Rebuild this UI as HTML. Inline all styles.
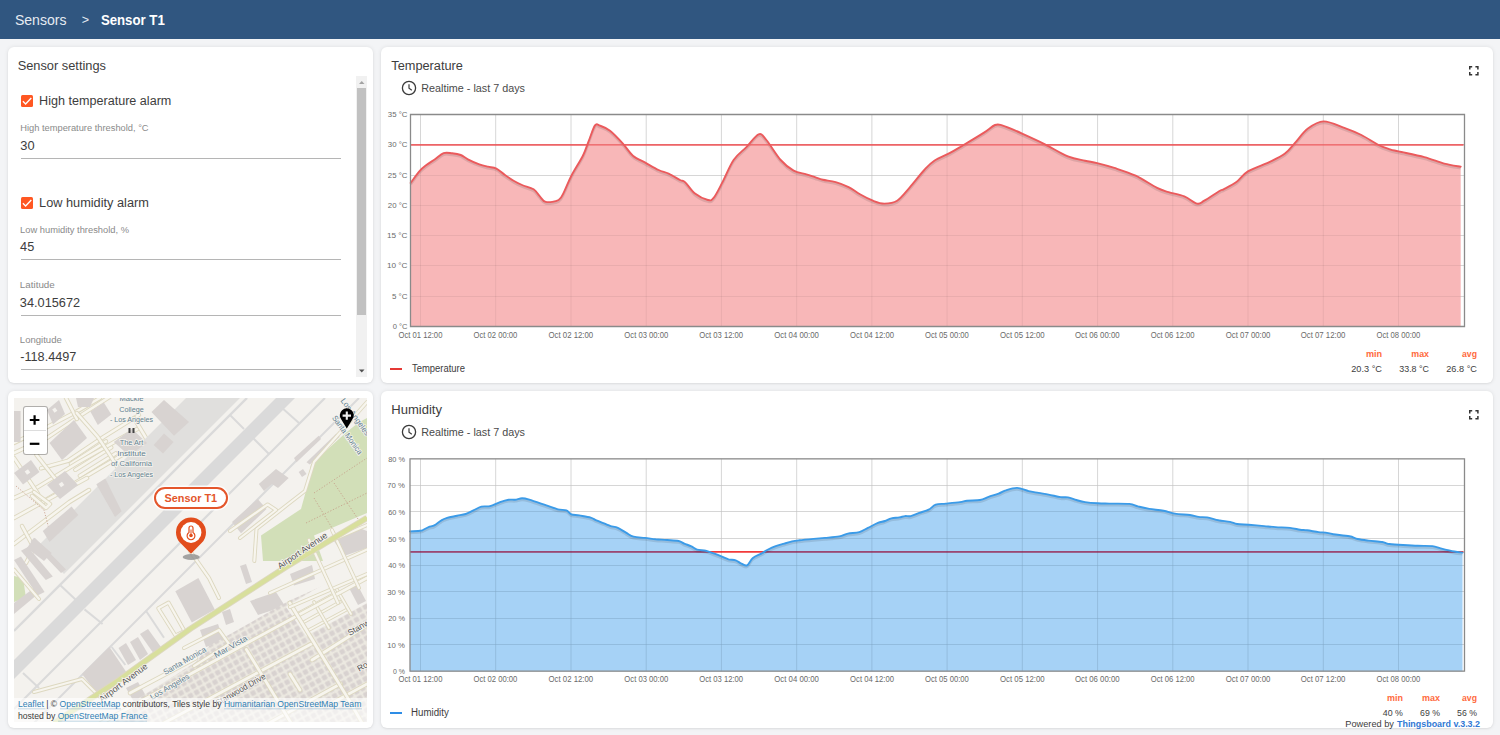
<!DOCTYPE html>
<html><head><meta charset="utf-8">
<style>
*{margin:0;padding:0;box-sizing:border-box}
html,body{width:1500px;height:735px;overflow:hidden;background:#f3f4f6;font-family:"Liberation Sans",sans-serif;color:rgba(0,0,0,0.76)}
.hdr{position:absolute;left:0;top:0;width:1500px;height:39px;background:#305680}
.hdr span{position:absolute;top:0;line-height:1;white-space:nowrap}
.card{position:absolute;background:#fff;border-radius:6px;box-shadow:0 0 4px rgba(0,0,0,.09),0 1px 2px rgba(0,0,0,.05)}
.t{position:absolute;white-space:nowrap;line-height:1}
svg text{font-family:"Liberation Sans",sans-serif}
.ax{font-size:7.6px;fill:#666}
</style></head><body>
<div class="hdr"></div>
<div class="card" style="left:8px;top:47px;width:365px;height:336px"></div>
<div class="card" style="left:381px;top:47px;width:1112px;height:336px"></div>
<div class="card" style="left:8px;top:391px;width:365px;height:337px"></div>
<div class="card" style="left:381px;top:391px;width:1112px;height:337px"></div>

<!-- settings -->
<div id="settings">
<div style="position:absolute;left:20.5px;top:94.7px;width:12.2px;height:12.2px;background:#ff5722;border-radius:1.5px"><svg width="12" height="12" style="position:absolute;left:0;top:0"><path d="M1.9,6.3 L4.6,8.9 L10.3,3.1" fill="none" stroke="#fff" stroke-width="1.4"/></svg></div>
<div style="position:absolute;left:20.5px;top:157.5px;width:320.5px;height:1px;background:#b5b5b5"></div>
<div style="position:absolute;left:20.5px;top:197.0px;width:12.2px;height:12.2px;background:#ff5722;border-radius:1.5px"><svg width="12" height="12" style="position:absolute;left:0;top:0"><path d="M1.9,6.3 L4.6,8.9 L10.3,3.1" fill="none" stroke="#fff" stroke-width="1.4"/></svg></div>
<div style="position:absolute;left:20.5px;top:258.8px;width:320.5px;height:1px;background:#b5b5b5"></div>
<div style="position:absolute;left:20.5px;top:314.6px;width:320.5px;height:1px;background:#b5b5b5"></div>
<div style="position:absolute;left:20.5px;top:368.6px;width:320.5px;height:1px;background:#b5b5b5"></div>
<div style="position:absolute;left:355.5px;top:76px;width:11.5px;height:300.6px;background:#f1f1f1"></div>
<div style="position:absolute;left:357px;top:88px;width:8.5px;height:227px;background:#c1c1c1"></div>
<svg width="12" height="12" style="position:absolute;left:355.5px;top:76px"><path d="M3,8 L8.5,8 L5.75,5 Z" fill="#a3a3a3"/></svg>
<svg width="12" height="12" style="position:absolute;left:355.5px;top:365px"><path d="M3,4.5 L8.5,4.5 L5.75,7.5 Z" fill="#505050"/></svg>
</div>

<svg width="1500" height="735" style="position:absolute;left:0;top:0">
<line x1="410.5" y1="114.5" x2="1464.5" y2="114.5" stroke="#e4e4e4" stroke-width="1"/>
<line x1="410.5" y1="144.5" x2="1464.5" y2="144.5" stroke="#e4e4e4" stroke-width="1"/>
<line x1="410.5" y1="175.5" x2="1464.5" y2="175.5" stroke="#e4e4e4" stroke-width="1"/>
<line x1="410.5" y1="205.5" x2="1464.5" y2="205.5" stroke="#e4e4e4" stroke-width="1"/>
<line x1="410.5" y1="235.5" x2="1464.5" y2="235.5" stroke="#e4e4e4" stroke-width="1"/>
<line x1="410.5" y1="265.5" x2="1464.5" y2="265.5" stroke="#e4e4e4" stroke-width="1"/>
<line x1="410.5" y1="296.5" x2="1464.5" y2="296.5" stroke="#e4e4e4" stroke-width="1"/>
<line x1="410.5" y1="326.5" x2="1464.5" y2="326.5" stroke="#e4e4e4" stroke-width="1"/>
<line x1="420.5" y1="114.5" x2="420.5" y2="326.5" stroke="#e4e4e4" stroke-width="1"/>
<line x1="495.7" y1="114.5" x2="495.7" y2="326.5" stroke="#e4e4e4" stroke-width="1"/>
<line x1="571.0" y1="114.5" x2="571.0" y2="326.5" stroke="#e4e4e4" stroke-width="1"/>
<line x1="646.2" y1="114.5" x2="646.2" y2="326.5" stroke="#e4e4e4" stroke-width="1"/>
<line x1="721.4" y1="114.5" x2="721.4" y2="326.5" stroke="#e4e4e4" stroke-width="1"/>
<line x1="796.7" y1="114.5" x2="796.7" y2="326.5" stroke="#e4e4e4" stroke-width="1"/>
<line x1="871.9" y1="114.5" x2="871.9" y2="326.5" stroke="#e4e4e4" stroke-width="1"/>
<line x1="947.1" y1="114.5" x2="947.1" y2="326.5" stroke="#e4e4e4" stroke-width="1"/>
<line x1="1022.3" y1="114.5" x2="1022.3" y2="326.5" stroke="#e4e4e4" stroke-width="1"/>
<line x1="1097.6" y1="114.5" x2="1097.6" y2="326.5" stroke="#e4e4e4" stroke-width="1"/>
<line x1="1172.8" y1="114.5" x2="1172.8" y2="326.5" stroke="#e4e4e4" stroke-width="1"/>
<line x1="1248.0" y1="114.5" x2="1248.0" y2="326.5" stroke="#e4e4e4" stroke-width="1"/>
<line x1="1323.3" y1="114.5" x2="1323.3" y2="326.5" stroke="#e4e4e4" stroke-width="1"/>
<line x1="1398.5" y1="114.5" x2="1398.5" y2="326.5" stroke="#e4e4e4" stroke-width="1"/>
<line x1="410.5" y1="144.8" x2="1463.5" y2="144.8" stroke="#ef5f62" stroke-width="1.3"/>
<path d="M410.7,182.9 C412.1,181.0 416.7,174.4 419.3,171.4 C421.9,168.4 423.8,167.0 426.4,165.0 C429.0,163.0 432.1,161.3 435.0,159.3 C437.9,157.3 440.8,154.1 443.6,153.1 C446.5,152.1 449.2,153.0 452.1,153.3 C455.0,153.6 458.1,154.0 460.7,155.0 C463.3,156.0 464.8,157.8 467.9,159.3 C471.0,160.9 476.0,163.1 479.3,164.3 C482.6,165.5 485.0,166.0 487.9,166.7 C490.8,167.4 493.5,167.2 496.4,168.6 C499.2,170.0 502.1,173.0 505.0,175.0 C507.9,177.0 510.8,179.0 513.6,180.7 C516.5,182.4 518.8,183.6 522.1,185.0 C525.4,186.4 530.7,187.5 533.6,189.3 C536.5,191.1 537.3,193.6 539.3,195.7 C541.3,197.8 542.5,201.2 545.7,201.9 C548.9,202.6 555.5,201.8 558.6,200.0 C561.7,198.2 562.2,195.5 564.3,191.4 C566.4,187.3 568.3,181.6 571.4,175.7 C574.5,169.8 580.0,161.4 582.9,155.7 C585.8,150.0 586.6,146.4 588.6,141.4 C590.6,136.4 593.1,128.0 595.0,125.4 C596.9,122.8 597.5,124.8 600.0,125.7 C602.5,126.6 606.2,127.7 610.0,130.7 C613.8,133.7 619.1,139.4 622.9,143.6 C626.7,147.8 629.1,152.5 632.9,155.7 C636.7,158.9 641.4,160.5 645.7,162.9 C650.0,165.3 654.8,168.2 658.6,170.0 C662.4,171.8 665.0,171.9 668.6,173.6 C672.2,175.3 677.3,178.6 680.0,180.0 C682.7,181.4 682.5,179.8 685.0,182.1 C687.5,184.4 691.2,190.6 695.0,193.6 C698.8,196.6 704.8,199.3 707.9,200.0 C711.0,200.7 711.2,200.8 713.6,197.9 C716.0,195.1 718.8,189.2 722.1,182.9 C725.4,176.6 729.6,166.0 733.6,160.0 C737.6,154.0 742.2,151.4 746.4,147.1 C750.6,142.8 755.3,135.5 758.6,134.3 C761.9,133.1 762.7,135.7 766.4,140.0 C770.1,144.3 776.2,154.9 780.7,160.0 C785.2,165.1 789.3,168.3 793.6,170.7 C797.9,173.1 802.8,173.2 806.4,174.3 C810.0,175.4 812.2,176.2 815.0,177.1 C817.8,178.0 819.4,178.9 822.9,179.7 C826.4,180.5 831.4,180.9 835.7,182.1 C840.0,183.3 844.6,185.1 848.6,187.1 C852.6,189.1 856.0,192.0 860.0,194.3 C864.0,196.6 868.9,199.1 872.9,200.7 C876.9,202.2 880.3,203.6 884.3,203.6 C888.3,203.6 892.8,203.4 897.1,200.7 C901.4,197.9 905.5,192.2 910.0,187.1 C914.5,182.0 920.2,174.4 924.3,170.0 C928.3,165.6 930.0,163.5 934.3,160.7 C938.6,157.8 945.1,155.5 950.0,152.9 C954.9,150.3 958.0,148.3 963.6,145.0 C969.2,141.7 978.4,136.2 983.6,132.9 C988.8,129.6 991.9,126.2 995.0,125.0 C998.1,123.8 997.6,124.0 1002.1,125.4 C1006.6,126.8 1015.0,130.4 1022.1,133.6 C1029.2,136.8 1037.4,140.5 1045.0,144.3 C1052.6,148.1 1061.2,153.7 1067.9,156.4 C1074.6,159.1 1080.1,159.6 1085.0,160.7 C1089.9,161.8 1092.2,161.9 1097.1,163.1 C1102.0,164.3 1107.9,165.8 1114.3,167.9 C1120.7,170.0 1128.6,172.4 1135.7,175.7 C1142.8,179.0 1151.6,185.2 1157.1,187.9 C1162.6,190.6 1164.1,190.7 1168.6,192.1 C1173.1,193.5 1179.5,194.5 1184.3,196.4 C1189.0,198.3 1193.8,202.9 1197.1,203.6 C1200.4,204.3 1200.5,202.8 1204.3,200.7 C1208.1,198.5 1216.8,192.6 1220.0,190.7 C1223.2,188.8 1220.9,190.7 1223.6,189.3 C1226.3,187.9 1232.4,185.1 1236.4,182.1 C1240.5,179.1 1242.4,174.7 1247.9,171.4 C1253.4,168.1 1263.1,165.1 1269.3,162.1 C1275.5,159.1 1280.7,156.8 1285.0,153.6 C1289.3,150.4 1291.2,147.1 1295.0,142.9 C1298.8,138.7 1303.1,132.2 1307.9,128.6 C1312.7,125.0 1317.5,121.5 1323.6,121.4 C1329.7,121.3 1338.0,125.6 1344.3,127.9 C1350.6,130.2 1355.7,132.2 1361.4,135.0 C1367.1,137.8 1373.8,142.6 1378.6,145.0 C1383.4,147.4 1386.7,148.2 1390.0,149.3 C1393.3,150.4 1392.9,150.1 1398.6,151.4 C1404.3,152.7 1416.7,155.1 1424.3,157.1 C1431.9,159.1 1438.2,162.0 1444.3,163.6 C1450.4,165.2 1458.0,166.2 1460.7,166.7 L1460.7,326.5 L410.7,326.5 Z" fill="#f8b7b8"/>
<line x1="410.5" y1="144.5" x2="1464.5" y2="144.5" stroke="rgba(0,0,0,0.06)" stroke-width="1"/>
<line x1="410.5" y1="175.5" x2="1464.5" y2="175.5" stroke="rgba(0,0,0,0.06)" stroke-width="1"/>
<line x1="410.5" y1="205.5" x2="1464.5" y2="205.5" stroke="rgba(0,0,0,0.06)" stroke-width="1"/>
<line x1="410.5" y1="235.5" x2="1464.5" y2="235.5" stroke="rgba(0,0,0,0.06)" stroke-width="1"/>
<line x1="410.5" y1="265.5" x2="1464.5" y2="265.5" stroke="rgba(0,0,0,0.06)" stroke-width="1"/>
<line x1="410.5" y1="296.5" x2="1464.5" y2="296.5" stroke="rgba(0,0,0,0.06)" stroke-width="1"/>
<line x1="420.5" y1="114.5" x2="420.5" y2="326.5" stroke="rgba(0,0,0,0.06)" stroke-width="1"/>
<line x1="495.7" y1="114.5" x2="495.7" y2="326.5" stroke="rgba(0,0,0,0.06)" stroke-width="1"/>
<line x1="571.0" y1="114.5" x2="571.0" y2="326.5" stroke="rgba(0,0,0,0.06)" stroke-width="1"/>
<line x1="646.2" y1="114.5" x2="646.2" y2="326.5" stroke="rgba(0,0,0,0.06)" stroke-width="1"/>
<line x1="721.4" y1="114.5" x2="721.4" y2="326.5" stroke="rgba(0,0,0,0.06)" stroke-width="1"/>
<line x1="796.7" y1="114.5" x2="796.7" y2="326.5" stroke="rgba(0,0,0,0.06)" stroke-width="1"/>
<line x1="871.9" y1="114.5" x2="871.9" y2="326.5" stroke="rgba(0,0,0,0.06)" stroke-width="1"/>
<line x1="947.1" y1="114.5" x2="947.1" y2="326.5" stroke="rgba(0,0,0,0.06)" stroke-width="1"/>
<line x1="1022.3" y1="114.5" x2="1022.3" y2="326.5" stroke="rgba(0,0,0,0.06)" stroke-width="1"/>
<line x1="1097.6" y1="114.5" x2="1097.6" y2="326.5" stroke="rgba(0,0,0,0.06)" stroke-width="1"/>
<line x1="1172.8" y1="114.5" x2="1172.8" y2="326.5" stroke="rgba(0,0,0,0.06)" stroke-width="1"/>
<line x1="1248.0" y1="114.5" x2="1248.0" y2="326.5" stroke="rgba(0,0,0,0.06)" stroke-width="1"/>
<line x1="1323.3" y1="114.5" x2="1323.3" y2="326.5" stroke="rgba(0,0,0,0.06)" stroke-width="1"/>
<line x1="1398.5" y1="114.5" x2="1398.5" y2="326.5" stroke="rgba(0,0,0,0.06)" stroke-width="1"/>
<path d="M410.7,182.9 C412.1,181.0 416.7,174.4 419.3,171.4 C421.9,168.4 423.8,167.0 426.4,165.0 C429.0,163.0 432.1,161.3 435.0,159.3 C437.9,157.3 440.8,154.1 443.6,153.1 C446.5,152.1 449.2,153.0 452.1,153.3 C455.0,153.6 458.1,154.0 460.7,155.0 C463.3,156.0 464.8,157.8 467.9,159.3 C471.0,160.9 476.0,163.1 479.3,164.3 C482.6,165.5 485.0,166.0 487.9,166.7 C490.8,167.4 493.5,167.2 496.4,168.6 C499.2,170.0 502.1,173.0 505.0,175.0 C507.9,177.0 510.8,179.0 513.6,180.7 C516.5,182.4 518.8,183.6 522.1,185.0 C525.4,186.4 530.7,187.5 533.6,189.3 C536.5,191.1 537.3,193.6 539.3,195.7 C541.3,197.8 542.5,201.2 545.7,201.9 C548.9,202.6 555.5,201.8 558.6,200.0 C561.7,198.2 562.2,195.5 564.3,191.4 C566.4,187.3 568.3,181.6 571.4,175.7 C574.5,169.8 580.0,161.4 582.9,155.7 C585.8,150.0 586.6,146.4 588.6,141.4 C590.6,136.4 593.1,128.0 595.0,125.4 C596.9,122.8 597.5,124.8 600.0,125.7 C602.5,126.6 606.2,127.7 610.0,130.7 C613.8,133.7 619.1,139.4 622.9,143.6 C626.7,147.8 629.1,152.5 632.9,155.7 C636.7,158.9 641.4,160.5 645.7,162.9 C650.0,165.3 654.8,168.2 658.6,170.0 C662.4,171.8 665.0,171.9 668.6,173.6 C672.2,175.3 677.3,178.6 680.0,180.0 C682.7,181.4 682.5,179.8 685.0,182.1 C687.5,184.4 691.2,190.6 695.0,193.6 C698.8,196.6 704.8,199.3 707.9,200.0 C711.0,200.7 711.2,200.8 713.6,197.9 C716.0,195.1 718.8,189.2 722.1,182.9 C725.4,176.6 729.6,166.0 733.6,160.0 C737.6,154.0 742.2,151.4 746.4,147.1 C750.6,142.8 755.3,135.5 758.6,134.3 C761.9,133.1 762.7,135.7 766.4,140.0 C770.1,144.3 776.2,154.9 780.7,160.0 C785.2,165.1 789.3,168.3 793.6,170.7 C797.9,173.1 802.8,173.2 806.4,174.3 C810.0,175.4 812.2,176.2 815.0,177.1 C817.8,178.0 819.4,178.9 822.9,179.7 C826.4,180.5 831.4,180.9 835.7,182.1 C840.0,183.3 844.6,185.1 848.6,187.1 C852.6,189.1 856.0,192.0 860.0,194.3 C864.0,196.6 868.9,199.1 872.9,200.7 C876.9,202.2 880.3,203.6 884.3,203.6 C888.3,203.6 892.8,203.4 897.1,200.7 C901.4,197.9 905.5,192.2 910.0,187.1 C914.5,182.0 920.2,174.4 924.3,170.0 C928.3,165.6 930.0,163.5 934.3,160.7 C938.6,157.8 945.1,155.5 950.0,152.9 C954.9,150.3 958.0,148.3 963.6,145.0 C969.2,141.7 978.4,136.2 983.6,132.9 C988.8,129.6 991.9,126.2 995.0,125.0 C998.1,123.8 997.6,124.0 1002.1,125.4 C1006.6,126.8 1015.0,130.4 1022.1,133.6 C1029.2,136.8 1037.4,140.5 1045.0,144.3 C1052.6,148.1 1061.2,153.7 1067.9,156.4 C1074.6,159.1 1080.1,159.6 1085.0,160.7 C1089.9,161.8 1092.2,161.9 1097.1,163.1 C1102.0,164.3 1107.9,165.8 1114.3,167.9 C1120.7,170.0 1128.6,172.4 1135.7,175.7 C1142.8,179.0 1151.6,185.2 1157.1,187.9 C1162.6,190.6 1164.1,190.7 1168.6,192.1 C1173.1,193.5 1179.5,194.5 1184.3,196.4 C1189.0,198.3 1193.8,202.9 1197.1,203.6 C1200.4,204.3 1200.5,202.8 1204.3,200.7 C1208.1,198.5 1216.8,192.6 1220.0,190.7 C1223.2,188.8 1220.9,190.7 1223.6,189.3 C1226.3,187.9 1232.4,185.1 1236.4,182.1 C1240.5,179.1 1242.4,174.7 1247.9,171.4 C1253.4,168.1 1263.1,165.1 1269.3,162.1 C1275.5,159.1 1280.7,156.8 1285.0,153.6 C1289.3,150.4 1291.2,147.1 1295.0,142.9 C1298.8,138.7 1303.1,132.2 1307.9,128.6 C1312.7,125.0 1317.5,121.5 1323.6,121.4 C1329.7,121.3 1338.0,125.6 1344.3,127.9 C1350.6,130.2 1355.7,132.2 1361.4,135.0 C1367.1,137.8 1373.8,142.6 1378.6,145.0 C1383.4,147.4 1386.7,148.2 1390.0,149.3 C1393.3,150.4 1392.9,150.1 1398.6,151.4 C1404.3,152.7 1416.7,155.1 1424.3,157.1 C1431.9,159.1 1438.2,162.0 1444.3,163.6 C1450.4,165.2 1458.0,166.2 1460.7,166.7" fill="none" stroke="rgba(0,0,0,0.10)" stroke-width="2.6" stroke-linejoin="round" transform="translate(0,1.6)"/>
<line x1="410.5" y1="144.8" x2="1463.5" y2="144.8" stroke="#ef5f62" stroke-width="1.3"/>
<path d="M410.7,182.9 C412.1,181.0 416.7,174.4 419.3,171.4 C421.9,168.4 423.8,167.0 426.4,165.0 C429.0,163.0 432.1,161.3 435.0,159.3 C437.9,157.3 440.8,154.1 443.6,153.1 C446.5,152.1 449.2,153.0 452.1,153.3 C455.0,153.6 458.1,154.0 460.7,155.0 C463.3,156.0 464.8,157.8 467.9,159.3 C471.0,160.9 476.0,163.1 479.3,164.3 C482.6,165.5 485.0,166.0 487.9,166.7 C490.8,167.4 493.5,167.2 496.4,168.6 C499.2,170.0 502.1,173.0 505.0,175.0 C507.9,177.0 510.8,179.0 513.6,180.7 C516.5,182.4 518.8,183.6 522.1,185.0 C525.4,186.4 530.7,187.5 533.6,189.3 C536.5,191.1 537.3,193.6 539.3,195.7 C541.3,197.8 542.5,201.2 545.7,201.9 C548.9,202.6 555.5,201.8 558.6,200.0 C561.7,198.2 562.2,195.5 564.3,191.4 C566.4,187.3 568.3,181.6 571.4,175.7 C574.5,169.8 580.0,161.4 582.9,155.7 C585.8,150.0 586.6,146.4 588.6,141.4 C590.6,136.4 593.1,128.0 595.0,125.4 C596.9,122.8 597.5,124.8 600.0,125.7 C602.5,126.6 606.2,127.7 610.0,130.7 C613.8,133.7 619.1,139.4 622.9,143.6 C626.7,147.8 629.1,152.5 632.9,155.7 C636.7,158.9 641.4,160.5 645.7,162.9 C650.0,165.3 654.8,168.2 658.6,170.0 C662.4,171.8 665.0,171.9 668.6,173.6 C672.2,175.3 677.3,178.6 680.0,180.0 C682.7,181.4 682.5,179.8 685.0,182.1 C687.5,184.4 691.2,190.6 695.0,193.6 C698.8,196.6 704.8,199.3 707.9,200.0 C711.0,200.7 711.2,200.8 713.6,197.9 C716.0,195.1 718.8,189.2 722.1,182.9 C725.4,176.6 729.6,166.0 733.6,160.0 C737.6,154.0 742.2,151.4 746.4,147.1 C750.6,142.8 755.3,135.5 758.6,134.3 C761.9,133.1 762.7,135.7 766.4,140.0 C770.1,144.3 776.2,154.9 780.7,160.0 C785.2,165.1 789.3,168.3 793.6,170.7 C797.9,173.1 802.8,173.2 806.4,174.3 C810.0,175.4 812.2,176.2 815.0,177.1 C817.8,178.0 819.4,178.9 822.9,179.7 C826.4,180.5 831.4,180.9 835.7,182.1 C840.0,183.3 844.6,185.1 848.6,187.1 C852.6,189.1 856.0,192.0 860.0,194.3 C864.0,196.6 868.9,199.1 872.9,200.7 C876.9,202.2 880.3,203.6 884.3,203.6 C888.3,203.6 892.8,203.4 897.1,200.7 C901.4,197.9 905.5,192.2 910.0,187.1 C914.5,182.0 920.2,174.4 924.3,170.0 C928.3,165.6 930.0,163.5 934.3,160.7 C938.6,157.8 945.1,155.5 950.0,152.9 C954.9,150.3 958.0,148.3 963.6,145.0 C969.2,141.7 978.4,136.2 983.6,132.9 C988.8,129.6 991.9,126.2 995.0,125.0 C998.1,123.8 997.6,124.0 1002.1,125.4 C1006.6,126.8 1015.0,130.4 1022.1,133.6 C1029.2,136.8 1037.4,140.5 1045.0,144.3 C1052.6,148.1 1061.2,153.7 1067.9,156.4 C1074.6,159.1 1080.1,159.6 1085.0,160.7 C1089.9,161.8 1092.2,161.9 1097.1,163.1 C1102.0,164.3 1107.9,165.8 1114.3,167.9 C1120.7,170.0 1128.6,172.4 1135.7,175.7 C1142.8,179.0 1151.6,185.2 1157.1,187.9 C1162.6,190.6 1164.1,190.7 1168.6,192.1 C1173.1,193.5 1179.5,194.5 1184.3,196.4 C1189.0,198.3 1193.8,202.9 1197.1,203.6 C1200.4,204.3 1200.5,202.8 1204.3,200.7 C1208.1,198.5 1216.8,192.6 1220.0,190.7 C1223.2,188.8 1220.9,190.7 1223.6,189.3 C1226.3,187.9 1232.4,185.1 1236.4,182.1 C1240.5,179.1 1242.4,174.7 1247.9,171.4 C1253.4,168.1 1263.1,165.1 1269.3,162.1 C1275.5,159.1 1280.7,156.8 1285.0,153.6 C1289.3,150.4 1291.2,147.1 1295.0,142.9 C1298.8,138.7 1303.1,132.2 1307.9,128.6 C1312.7,125.0 1317.5,121.5 1323.6,121.4 C1329.7,121.3 1338.0,125.6 1344.3,127.9 C1350.6,130.2 1355.7,132.2 1361.4,135.0 C1367.1,137.8 1373.8,142.6 1378.6,145.0 C1383.4,147.4 1386.7,148.2 1390.0,149.3 C1393.3,150.4 1392.9,150.1 1398.6,151.4 C1404.3,152.7 1416.7,155.1 1424.3,157.1 C1431.9,159.1 1438.2,162.0 1444.3,163.6 C1450.4,165.2 1458.0,166.2 1460.7,166.7" fill="none" stroke="#eb5a5c" stroke-width="1.9" stroke-linejoin="round" stroke-linecap="round"/>
<path d="M410.5,114.5 H1464.5 V326.5 H410.5 Z" fill="none" stroke="#8a8a8a" stroke-width="1.3"/>
<line x1="410.0" y1="458.5" x2="1464.5" y2="458.5" stroke="#e4e4e4" stroke-width="1"/>
<line x1="410.0" y1="485.5" x2="1464.5" y2="485.5" stroke="#e4e4e4" stroke-width="1"/>
<line x1="410.0" y1="511.5" x2="1464.5" y2="511.5" stroke="#e4e4e4" stroke-width="1"/>
<line x1="410.0" y1="538.5" x2="1464.5" y2="538.5" stroke="#e4e4e4" stroke-width="1"/>
<line x1="410.0" y1="565.5" x2="1464.5" y2="565.5" stroke="#e4e4e4" stroke-width="1"/>
<line x1="410.0" y1="591.5" x2="1464.5" y2="591.5" stroke="#e4e4e4" stroke-width="1"/>
<line x1="410.0" y1="618.5" x2="1464.5" y2="618.5" stroke="#e4e4e4" stroke-width="1"/>
<line x1="410.0" y1="644.5" x2="1464.5" y2="644.5" stroke="#e4e4e4" stroke-width="1"/>
<line x1="410.0" y1="671.5" x2="1464.5" y2="671.5" stroke="#e4e4e4" stroke-width="1"/>
<line x1="420.5" y1="458.9" x2="420.5" y2="671.2" stroke="#e4e4e4" stroke-width="1"/>
<line x1="495.7" y1="458.9" x2="495.7" y2="671.2" stroke="#e4e4e4" stroke-width="1"/>
<line x1="571.0" y1="458.9" x2="571.0" y2="671.2" stroke="#e4e4e4" stroke-width="1"/>
<line x1="646.2" y1="458.9" x2="646.2" y2="671.2" stroke="#e4e4e4" stroke-width="1"/>
<line x1="721.4" y1="458.9" x2="721.4" y2="671.2" stroke="#e4e4e4" stroke-width="1"/>
<line x1="796.7" y1="458.9" x2="796.7" y2="671.2" stroke="#e4e4e4" stroke-width="1"/>
<line x1="871.9" y1="458.9" x2="871.9" y2="671.2" stroke="#e4e4e4" stroke-width="1"/>
<line x1="947.1" y1="458.9" x2="947.1" y2="671.2" stroke="#e4e4e4" stroke-width="1"/>
<line x1="1022.3" y1="458.9" x2="1022.3" y2="671.2" stroke="#e4e4e4" stroke-width="1"/>
<line x1="1097.6" y1="458.9" x2="1097.6" y2="671.2" stroke="#e4e4e4" stroke-width="1"/>
<line x1="1172.8" y1="458.9" x2="1172.8" y2="671.2" stroke="#e4e4e4" stroke-width="1"/>
<line x1="1248.0" y1="458.9" x2="1248.0" y2="671.2" stroke="#e4e4e4" stroke-width="1"/>
<line x1="1323.3" y1="458.9" x2="1323.3" y2="671.2" stroke="#e4e4e4" stroke-width="1"/>
<line x1="1398.5" y1="458.9" x2="1398.5" y2="671.2" stroke="#e4e4e4" stroke-width="1"/>
<line x1="410.0" y1="551.8" x2="1463.5" y2="551.8" stroke="#f23a3a" stroke-width="1.8"/>
<path d="M410.0,531.4 C411.7,531.3 417.9,530.9 420.0,530.7 C422.1,530.5 421.5,530.6 422.9,530.0 C424.3,529.4 426.7,527.9 428.6,527.1 C430.5,526.3 432.2,526.5 434.3,525.4 C436.4,524.3 439.3,521.6 441.4,520.4 C443.5,519.1 444.5,518.7 447.1,517.9 C449.7,517.1 454.0,516.4 457.1,515.7 C460.2,515.1 463.1,514.8 465.7,514.0 C468.3,513.2 470.3,511.9 472.9,510.7 C475.5,509.5 478.5,507.5 481.4,506.7 C484.2,505.9 486.9,506.9 490.0,506.1 C493.1,505.3 496.9,503.2 500.0,502.1 C503.1,501.0 506.1,500.1 508.6,499.7 C511.1,499.3 512.8,499.9 515.0,499.7 C517.2,499.5 519.7,498.3 522.1,498.3 C524.5,498.3 525.2,498.5 529.3,499.7 C533.3,500.9 541.6,503.8 546.4,505.4 C551.2,507.0 554.6,508.5 557.9,509.3 C561.2,510.1 564.1,509.6 566.4,510.4 C568.6,511.2 569.2,513.5 571.4,514.3 C573.5,515.1 576.1,514.8 579.3,515.4 C582.5,516.0 587.9,516.8 590.7,517.6 C593.6,518.4 593.8,519.2 596.4,520.3 C599.0,521.4 604.0,523.3 606.4,524.3 C608.8,525.3 608.8,525.5 610.7,526.1 C612.6,526.7 615.3,526.8 617.9,527.9 C620.5,529.0 623.8,531.4 626.4,532.9 C629.0,534.4 630.5,535.9 633.6,536.7 C636.7,537.5 641.3,537.5 645.0,537.9 C648.7,538.3 652.0,538.9 655.7,539.3 C659.4,539.6 663.3,539.7 667.1,540.0 C670.9,540.3 675.7,540.4 678.6,541.0 C681.5,541.6 682.2,542.7 684.3,543.6 C686.4,544.5 689.3,545.4 691.4,546.4 C693.5,547.4 694.7,548.9 697.1,549.6 C699.5,550.3 703.1,550.1 705.7,550.7 C708.3,551.3 710.3,552.2 712.9,553.1 C715.5,554.0 718.8,555.4 721.4,556.4 C724.0,557.4 726.2,558.6 728.6,559.3 C731.0,559.9 733.6,559.6 735.7,560.3 C737.8,561.0 739.5,562.8 741.4,563.6 C743.3,564.4 745.2,566.2 747.1,565.3 C749.0,564.3 750.5,559.8 752.9,557.9 C755.3,556.0 759.0,554.9 761.4,553.6 C763.8,552.3 764.7,551.2 767.1,550.0 C769.5,548.8 772.8,547.2 775.7,546.1 C778.6,545.0 781.6,544.4 784.3,543.6 C787.0,542.8 789.6,542.0 792.1,541.4 C794.6,540.8 795.7,540.7 799.3,540.3 C802.9,539.9 809.3,539.3 813.6,538.9 C817.9,538.5 820.7,538.3 825.0,537.9 C829.3,537.5 835.5,537.1 839.3,536.4 C843.1,535.7 844.6,534.3 847.9,533.6 C851.2,532.9 856.0,533.1 859.3,532.1 C862.6,531.1 864.8,529.4 867.9,527.9 C871.0,526.4 875.0,524.0 877.9,522.9 C880.8,521.8 882.8,521.8 885.0,521.0 C887.2,520.2 889.0,518.9 891.4,518.3 C893.8,517.7 897.0,517.8 899.3,517.4 C901.6,517.0 903.1,516.3 905.0,516.1 C906.9,515.9 908.3,516.6 910.7,516.1 C913.1,515.6 916.3,514.0 919.3,512.9 C922.3,511.8 925.9,511.1 928.6,509.7 C931.3,508.3 932.9,505.7 935.7,504.7 C938.6,503.7 941.7,504.0 945.7,503.6 C949.8,503.2 956.4,502.6 960.0,502.1 C963.6,501.6 963.8,501.1 967.1,500.7 C970.4,500.3 976.4,500.6 980.0,500.0 C983.6,499.4 985.5,498.0 988.6,496.9 C991.7,495.8 995.8,494.7 998.6,493.6 C1001.5,492.5 1002.6,491.3 1005.7,490.4 C1008.8,489.4 1013.3,487.8 1017.1,487.9 C1020.9,488.0 1025.0,490.3 1028.6,491.1 C1032.2,491.9 1035.3,492.3 1038.6,492.9 C1041.9,493.5 1044.9,493.9 1048.6,494.6 C1052.3,495.3 1057.5,496.6 1060.7,497.1 C1063.9,497.6 1065.3,496.9 1067.9,497.4 C1070.5,497.9 1073.6,499.2 1076.4,500.0 C1079.2,500.8 1081.4,501.6 1085.0,502.1 C1088.6,502.7 1093.9,503.1 1097.9,503.3 C1102.0,503.6 1104.1,503.5 1109.3,503.6 C1114.5,503.7 1124.5,503.4 1129.3,503.9 C1134.1,504.4 1134.6,505.6 1137.9,506.4 C1141.2,507.2 1145.0,508.2 1149.3,508.9 C1153.6,509.6 1159.3,509.9 1163.6,510.7 C1167.9,511.5 1170.6,512.9 1175.0,513.6 C1179.4,514.3 1186.1,514.5 1190.0,515.0 C1193.9,515.5 1195.8,516.5 1198.6,516.9 C1201.4,517.3 1203.8,516.8 1207.1,517.4 C1210.4,518.0 1214.8,519.5 1218.6,520.3 C1222.4,521.0 1226.9,521.3 1230.0,521.9 C1233.1,522.5 1234.0,523.5 1237.1,524.0 C1240.2,524.5 1244.1,524.4 1248.6,524.7 C1253.1,525.1 1259.8,525.7 1264.3,526.1 C1268.8,526.5 1271.4,526.8 1275.7,527.1 C1280.0,527.4 1286.0,527.5 1290.0,527.9 C1294.0,528.3 1297.2,529.3 1300.0,529.7 C1302.8,530.1 1304.0,529.9 1307.1,530.3 C1310.2,530.7 1315.5,531.7 1318.6,532.1 C1321.7,532.5 1323.3,532.2 1325.7,532.6 C1328.1,533.0 1329.2,533.6 1333.2,534.2 C1337.2,534.8 1345.4,535.5 1349.5,536.3 C1353.6,537.1 1354.5,538.3 1357.7,539.0 C1360.9,539.7 1364.5,540.1 1368.6,540.6 C1372.7,541.1 1379.0,541.5 1382.2,542.0 C1385.4,542.5 1384.9,543.3 1387.6,543.8 C1390.3,544.2 1393.5,544.4 1398.5,544.7 C1403.5,545.0 1411.9,545.6 1417.6,545.8 C1423.3,546.0 1428.7,545.7 1432.5,546.1 C1436.3,546.5 1437.1,547.4 1440.7,548.3 C1444.3,549.2 1450.7,550.8 1454.3,551.5 C1457.9,552.2 1461.1,552.4 1462.5,552.6 L1462.5,671.2 L410.0,671.2 Z" fill="rgba(112,183,240,0.62)"/>
<clipPath id="clip458"><path d="M410.0,531.4 C411.7,531.3 417.9,530.9 420.0,530.7 C422.1,530.5 421.5,530.6 422.9,530.0 C424.3,529.4 426.7,527.9 428.6,527.1 C430.5,526.3 432.2,526.5 434.3,525.4 C436.4,524.3 439.3,521.6 441.4,520.4 C443.5,519.1 444.5,518.7 447.1,517.9 C449.7,517.1 454.0,516.4 457.1,515.7 C460.2,515.1 463.1,514.8 465.7,514.0 C468.3,513.2 470.3,511.9 472.9,510.7 C475.5,509.5 478.5,507.5 481.4,506.7 C484.2,505.9 486.9,506.9 490.0,506.1 C493.1,505.3 496.9,503.2 500.0,502.1 C503.1,501.0 506.1,500.1 508.6,499.7 C511.1,499.3 512.8,499.9 515.0,499.7 C517.2,499.5 519.7,498.3 522.1,498.3 C524.5,498.3 525.2,498.5 529.3,499.7 C533.3,500.9 541.6,503.8 546.4,505.4 C551.2,507.0 554.6,508.5 557.9,509.3 C561.2,510.1 564.1,509.6 566.4,510.4 C568.6,511.2 569.2,513.5 571.4,514.3 C573.5,515.1 576.1,514.8 579.3,515.4 C582.5,516.0 587.9,516.8 590.7,517.6 C593.6,518.4 593.8,519.2 596.4,520.3 C599.0,521.4 604.0,523.3 606.4,524.3 C608.8,525.3 608.8,525.5 610.7,526.1 C612.6,526.7 615.3,526.8 617.9,527.9 C620.5,529.0 623.8,531.4 626.4,532.9 C629.0,534.4 630.5,535.9 633.6,536.7 C636.7,537.5 641.3,537.5 645.0,537.9 C648.7,538.3 652.0,538.9 655.7,539.3 C659.4,539.6 663.3,539.7 667.1,540.0 C670.9,540.3 675.7,540.4 678.6,541.0 C681.5,541.6 682.2,542.7 684.3,543.6 C686.4,544.5 689.3,545.4 691.4,546.4 C693.5,547.4 694.7,548.9 697.1,549.6 C699.5,550.3 703.1,550.1 705.7,550.7 C708.3,551.3 710.3,552.2 712.9,553.1 C715.5,554.0 718.8,555.4 721.4,556.4 C724.0,557.4 726.2,558.6 728.6,559.3 C731.0,559.9 733.6,559.6 735.7,560.3 C737.8,561.0 739.5,562.8 741.4,563.6 C743.3,564.4 745.2,566.2 747.1,565.3 C749.0,564.3 750.5,559.8 752.9,557.9 C755.3,556.0 759.0,554.9 761.4,553.6 C763.8,552.3 764.7,551.2 767.1,550.0 C769.5,548.8 772.8,547.2 775.7,546.1 C778.6,545.0 781.6,544.4 784.3,543.6 C787.0,542.8 789.6,542.0 792.1,541.4 C794.6,540.8 795.7,540.7 799.3,540.3 C802.9,539.9 809.3,539.3 813.6,538.9 C817.9,538.5 820.7,538.3 825.0,537.9 C829.3,537.5 835.5,537.1 839.3,536.4 C843.1,535.7 844.6,534.3 847.9,533.6 C851.2,532.9 856.0,533.1 859.3,532.1 C862.6,531.1 864.8,529.4 867.9,527.9 C871.0,526.4 875.0,524.0 877.9,522.9 C880.8,521.8 882.8,521.8 885.0,521.0 C887.2,520.2 889.0,518.9 891.4,518.3 C893.8,517.7 897.0,517.8 899.3,517.4 C901.6,517.0 903.1,516.3 905.0,516.1 C906.9,515.9 908.3,516.6 910.7,516.1 C913.1,515.6 916.3,514.0 919.3,512.9 C922.3,511.8 925.9,511.1 928.6,509.7 C931.3,508.3 932.9,505.7 935.7,504.7 C938.6,503.7 941.7,504.0 945.7,503.6 C949.8,503.2 956.4,502.6 960.0,502.1 C963.6,501.6 963.8,501.1 967.1,500.7 C970.4,500.3 976.4,500.6 980.0,500.0 C983.6,499.4 985.5,498.0 988.6,496.9 C991.7,495.8 995.8,494.7 998.6,493.6 C1001.5,492.5 1002.6,491.3 1005.7,490.4 C1008.8,489.4 1013.3,487.8 1017.1,487.9 C1020.9,488.0 1025.0,490.3 1028.6,491.1 C1032.2,491.9 1035.3,492.3 1038.6,492.9 C1041.9,493.5 1044.9,493.9 1048.6,494.6 C1052.3,495.3 1057.5,496.6 1060.7,497.1 C1063.9,497.6 1065.3,496.9 1067.9,497.4 C1070.5,497.9 1073.6,499.2 1076.4,500.0 C1079.2,500.8 1081.4,501.6 1085.0,502.1 C1088.6,502.7 1093.9,503.1 1097.9,503.3 C1102.0,503.6 1104.1,503.5 1109.3,503.6 C1114.5,503.7 1124.5,503.4 1129.3,503.9 C1134.1,504.4 1134.6,505.6 1137.9,506.4 C1141.2,507.2 1145.0,508.2 1149.3,508.9 C1153.6,509.6 1159.3,509.9 1163.6,510.7 C1167.9,511.5 1170.6,512.9 1175.0,513.6 C1179.4,514.3 1186.1,514.5 1190.0,515.0 C1193.9,515.5 1195.8,516.5 1198.6,516.9 C1201.4,517.3 1203.8,516.8 1207.1,517.4 C1210.4,518.0 1214.8,519.5 1218.6,520.3 C1222.4,521.0 1226.9,521.3 1230.0,521.9 C1233.1,522.5 1234.0,523.5 1237.1,524.0 C1240.2,524.5 1244.1,524.4 1248.6,524.7 C1253.1,525.1 1259.8,525.7 1264.3,526.1 C1268.8,526.5 1271.4,526.8 1275.7,527.1 C1280.0,527.4 1286.0,527.5 1290.0,527.9 C1294.0,528.3 1297.2,529.3 1300.0,529.7 C1302.8,530.1 1304.0,529.9 1307.1,530.3 C1310.2,530.7 1315.5,531.7 1318.6,532.1 C1321.7,532.5 1323.3,532.2 1325.7,532.6 C1328.1,533.0 1329.2,533.6 1333.2,534.2 C1337.2,534.8 1345.4,535.5 1349.5,536.3 C1353.6,537.1 1354.5,538.3 1357.7,539.0 C1360.9,539.7 1364.5,540.1 1368.6,540.6 C1372.7,541.1 1379.0,541.5 1382.2,542.0 C1385.4,542.5 1384.9,543.3 1387.6,543.8 C1390.3,544.2 1393.5,544.4 1398.5,544.7 C1403.5,545.0 1411.9,545.6 1417.6,545.8 C1423.3,546.0 1428.7,545.7 1432.5,546.1 C1436.3,546.5 1437.1,547.4 1440.7,548.3 C1444.3,549.2 1450.7,550.8 1454.3,551.5 C1457.9,552.2 1461.1,552.4 1462.5,552.6 L1462.5,671.2 L410.0,671.2 Z"/></clipPath>
<line x1="410.0" y1="551.8" x2="1463.5" y2="551.8" stroke="rgba(150,20,70,0.55)" stroke-width="1.8" clip-path="url(#clip458)"/>
<line x1="410.0" y1="485.5" x2="1464.5" y2="485.5" stroke="rgba(0,0,0,0.06)" stroke-width="1"/>
<line x1="410.0" y1="511.5" x2="1464.5" y2="511.5" stroke="rgba(0,0,0,0.06)" stroke-width="1"/>
<line x1="410.0" y1="538.5" x2="1464.5" y2="538.5" stroke="rgba(0,0,0,0.06)" stroke-width="1"/>
<line x1="410.0" y1="565.5" x2="1464.5" y2="565.5" stroke="rgba(0,0,0,0.06)" stroke-width="1"/>
<line x1="410.0" y1="591.5" x2="1464.5" y2="591.5" stroke="rgba(0,0,0,0.06)" stroke-width="1"/>
<line x1="410.0" y1="618.5" x2="1464.5" y2="618.5" stroke="rgba(0,0,0,0.06)" stroke-width="1"/>
<line x1="410.0" y1="644.5" x2="1464.5" y2="644.5" stroke="rgba(0,0,0,0.06)" stroke-width="1"/>
<line x1="420.5" y1="458.9" x2="420.5" y2="671.2" stroke="rgba(0,0,0,0.06)" stroke-width="1"/>
<line x1="495.7" y1="458.9" x2="495.7" y2="671.2" stroke="rgba(0,0,0,0.06)" stroke-width="1"/>
<line x1="571.0" y1="458.9" x2="571.0" y2="671.2" stroke="rgba(0,0,0,0.06)" stroke-width="1"/>
<line x1="646.2" y1="458.9" x2="646.2" y2="671.2" stroke="rgba(0,0,0,0.06)" stroke-width="1"/>
<line x1="721.4" y1="458.9" x2="721.4" y2="671.2" stroke="rgba(0,0,0,0.06)" stroke-width="1"/>
<line x1="796.7" y1="458.9" x2="796.7" y2="671.2" stroke="rgba(0,0,0,0.06)" stroke-width="1"/>
<line x1="871.9" y1="458.9" x2="871.9" y2="671.2" stroke="rgba(0,0,0,0.06)" stroke-width="1"/>
<line x1="947.1" y1="458.9" x2="947.1" y2="671.2" stroke="rgba(0,0,0,0.06)" stroke-width="1"/>
<line x1="1022.3" y1="458.9" x2="1022.3" y2="671.2" stroke="rgba(0,0,0,0.06)" stroke-width="1"/>
<line x1="1097.6" y1="458.9" x2="1097.6" y2="671.2" stroke="rgba(0,0,0,0.06)" stroke-width="1"/>
<line x1="1172.8" y1="458.9" x2="1172.8" y2="671.2" stroke="rgba(0,0,0,0.06)" stroke-width="1"/>
<line x1="1248.0" y1="458.9" x2="1248.0" y2="671.2" stroke="rgba(0,0,0,0.06)" stroke-width="1"/>
<line x1="1323.3" y1="458.9" x2="1323.3" y2="671.2" stroke="rgba(0,0,0,0.06)" stroke-width="1"/>
<line x1="1398.5" y1="458.9" x2="1398.5" y2="671.2" stroke="rgba(0,0,0,0.06)" stroke-width="1"/>
<path d="M410.0,531.4 C411.7,531.3 417.9,530.9 420.0,530.7 C422.1,530.5 421.5,530.6 422.9,530.0 C424.3,529.4 426.7,527.9 428.6,527.1 C430.5,526.3 432.2,526.5 434.3,525.4 C436.4,524.3 439.3,521.6 441.4,520.4 C443.5,519.1 444.5,518.7 447.1,517.9 C449.7,517.1 454.0,516.4 457.1,515.7 C460.2,515.1 463.1,514.8 465.7,514.0 C468.3,513.2 470.3,511.9 472.9,510.7 C475.5,509.5 478.5,507.5 481.4,506.7 C484.2,505.9 486.9,506.9 490.0,506.1 C493.1,505.3 496.9,503.2 500.0,502.1 C503.1,501.0 506.1,500.1 508.6,499.7 C511.1,499.3 512.8,499.9 515.0,499.7 C517.2,499.5 519.7,498.3 522.1,498.3 C524.5,498.3 525.2,498.5 529.3,499.7 C533.3,500.9 541.6,503.8 546.4,505.4 C551.2,507.0 554.6,508.5 557.9,509.3 C561.2,510.1 564.1,509.6 566.4,510.4 C568.6,511.2 569.2,513.5 571.4,514.3 C573.5,515.1 576.1,514.8 579.3,515.4 C582.5,516.0 587.9,516.8 590.7,517.6 C593.6,518.4 593.8,519.2 596.4,520.3 C599.0,521.4 604.0,523.3 606.4,524.3 C608.8,525.3 608.8,525.5 610.7,526.1 C612.6,526.7 615.3,526.8 617.9,527.9 C620.5,529.0 623.8,531.4 626.4,532.9 C629.0,534.4 630.5,535.9 633.6,536.7 C636.7,537.5 641.3,537.5 645.0,537.9 C648.7,538.3 652.0,538.9 655.7,539.3 C659.4,539.6 663.3,539.7 667.1,540.0 C670.9,540.3 675.7,540.4 678.6,541.0 C681.5,541.6 682.2,542.7 684.3,543.6 C686.4,544.5 689.3,545.4 691.4,546.4 C693.5,547.4 694.7,548.9 697.1,549.6 C699.5,550.3 703.1,550.1 705.7,550.7 C708.3,551.3 710.3,552.2 712.9,553.1 C715.5,554.0 718.8,555.4 721.4,556.4 C724.0,557.4 726.2,558.6 728.6,559.3 C731.0,559.9 733.6,559.6 735.7,560.3 C737.8,561.0 739.5,562.8 741.4,563.6 C743.3,564.4 745.2,566.2 747.1,565.3 C749.0,564.3 750.5,559.8 752.9,557.9 C755.3,556.0 759.0,554.9 761.4,553.6 C763.8,552.3 764.7,551.2 767.1,550.0 C769.5,548.8 772.8,547.2 775.7,546.1 C778.6,545.0 781.6,544.4 784.3,543.6 C787.0,542.8 789.6,542.0 792.1,541.4 C794.6,540.8 795.7,540.7 799.3,540.3 C802.9,539.9 809.3,539.3 813.6,538.9 C817.9,538.5 820.7,538.3 825.0,537.9 C829.3,537.5 835.5,537.1 839.3,536.4 C843.1,535.7 844.6,534.3 847.9,533.6 C851.2,532.9 856.0,533.1 859.3,532.1 C862.6,531.1 864.8,529.4 867.9,527.9 C871.0,526.4 875.0,524.0 877.9,522.9 C880.8,521.8 882.8,521.8 885.0,521.0 C887.2,520.2 889.0,518.9 891.4,518.3 C893.8,517.7 897.0,517.8 899.3,517.4 C901.6,517.0 903.1,516.3 905.0,516.1 C906.9,515.9 908.3,516.6 910.7,516.1 C913.1,515.6 916.3,514.0 919.3,512.9 C922.3,511.8 925.9,511.1 928.6,509.7 C931.3,508.3 932.9,505.7 935.7,504.7 C938.6,503.7 941.7,504.0 945.7,503.6 C949.8,503.2 956.4,502.6 960.0,502.1 C963.6,501.6 963.8,501.1 967.1,500.7 C970.4,500.3 976.4,500.6 980.0,500.0 C983.6,499.4 985.5,498.0 988.6,496.9 C991.7,495.8 995.8,494.7 998.6,493.6 C1001.5,492.5 1002.6,491.3 1005.7,490.4 C1008.8,489.4 1013.3,487.8 1017.1,487.9 C1020.9,488.0 1025.0,490.3 1028.6,491.1 C1032.2,491.9 1035.3,492.3 1038.6,492.9 C1041.9,493.5 1044.9,493.9 1048.6,494.6 C1052.3,495.3 1057.5,496.6 1060.7,497.1 C1063.9,497.6 1065.3,496.9 1067.9,497.4 C1070.5,497.9 1073.6,499.2 1076.4,500.0 C1079.2,500.8 1081.4,501.6 1085.0,502.1 C1088.6,502.7 1093.9,503.1 1097.9,503.3 C1102.0,503.6 1104.1,503.5 1109.3,503.6 C1114.5,503.7 1124.5,503.4 1129.3,503.9 C1134.1,504.4 1134.6,505.6 1137.9,506.4 C1141.2,507.2 1145.0,508.2 1149.3,508.9 C1153.6,509.6 1159.3,509.9 1163.6,510.7 C1167.9,511.5 1170.6,512.9 1175.0,513.6 C1179.4,514.3 1186.1,514.5 1190.0,515.0 C1193.9,515.5 1195.8,516.5 1198.6,516.9 C1201.4,517.3 1203.8,516.8 1207.1,517.4 C1210.4,518.0 1214.8,519.5 1218.6,520.3 C1222.4,521.0 1226.9,521.3 1230.0,521.9 C1233.1,522.5 1234.0,523.5 1237.1,524.0 C1240.2,524.5 1244.1,524.4 1248.6,524.7 C1253.1,525.1 1259.8,525.7 1264.3,526.1 C1268.8,526.5 1271.4,526.8 1275.7,527.1 C1280.0,527.4 1286.0,527.5 1290.0,527.9 C1294.0,528.3 1297.2,529.3 1300.0,529.7 C1302.8,530.1 1304.0,529.9 1307.1,530.3 C1310.2,530.7 1315.5,531.7 1318.6,532.1 C1321.7,532.5 1323.3,532.2 1325.7,532.6 C1328.1,533.0 1329.2,533.6 1333.2,534.2 C1337.2,534.8 1345.4,535.5 1349.5,536.3 C1353.6,537.1 1354.5,538.3 1357.7,539.0 C1360.9,539.7 1364.5,540.1 1368.6,540.6 C1372.7,541.1 1379.0,541.5 1382.2,542.0 C1385.4,542.5 1384.9,543.3 1387.6,543.8 C1390.3,544.2 1393.5,544.4 1398.5,544.7 C1403.5,545.0 1411.9,545.6 1417.6,545.8 C1423.3,546.0 1428.7,545.7 1432.5,546.1 C1436.3,546.5 1437.1,547.4 1440.7,548.3 C1444.3,549.2 1450.7,550.8 1454.3,551.5 C1457.9,552.2 1461.1,552.4 1462.5,552.6" fill="none" stroke="rgba(0,0,0,0.10)" stroke-width="2.6" stroke-linejoin="round" transform="translate(0,1.6)"/>
<path d="M410.0,531.4 C411.7,531.3 417.9,530.9 420.0,530.7 C422.1,530.5 421.5,530.6 422.9,530.0 C424.3,529.4 426.7,527.9 428.6,527.1 C430.5,526.3 432.2,526.5 434.3,525.4 C436.4,524.3 439.3,521.6 441.4,520.4 C443.5,519.1 444.5,518.7 447.1,517.9 C449.7,517.1 454.0,516.4 457.1,515.7 C460.2,515.1 463.1,514.8 465.7,514.0 C468.3,513.2 470.3,511.9 472.9,510.7 C475.5,509.5 478.5,507.5 481.4,506.7 C484.2,505.9 486.9,506.9 490.0,506.1 C493.1,505.3 496.9,503.2 500.0,502.1 C503.1,501.0 506.1,500.1 508.6,499.7 C511.1,499.3 512.8,499.9 515.0,499.7 C517.2,499.5 519.7,498.3 522.1,498.3 C524.5,498.3 525.2,498.5 529.3,499.7 C533.3,500.9 541.6,503.8 546.4,505.4 C551.2,507.0 554.6,508.5 557.9,509.3 C561.2,510.1 564.1,509.6 566.4,510.4 C568.6,511.2 569.2,513.5 571.4,514.3 C573.5,515.1 576.1,514.8 579.3,515.4 C582.5,516.0 587.9,516.8 590.7,517.6 C593.6,518.4 593.8,519.2 596.4,520.3 C599.0,521.4 604.0,523.3 606.4,524.3 C608.8,525.3 608.8,525.5 610.7,526.1 C612.6,526.7 615.3,526.8 617.9,527.9 C620.5,529.0 623.8,531.4 626.4,532.9 C629.0,534.4 630.5,535.9 633.6,536.7 C636.7,537.5 641.3,537.5 645.0,537.9 C648.7,538.3 652.0,538.9 655.7,539.3 C659.4,539.6 663.3,539.7 667.1,540.0 C670.9,540.3 675.7,540.4 678.6,541.0 C681.5,541.6 682.2,542.7 684.3,543.6 C686.4,544.5 689.3,545.4 691.4,546.4 C693.5,547.4 694.7,548.9 697.1,549.6 C699.5,550.3 703.1,550.1 705.7,550.7 C708.3,551.3 710.3,552.2 712.9,553.1 C715.5,554.0 718.8,555.4 721.4,556.4 C724.0,557.4 726.2,558.6 728.6,559.3 C731.0,559.9 733.6,559.6 735.7,560.3 C737.8,561.0 739.5,562.8 741.4,563.6 C743.3,564.4 745.2,566.2 747.1,565.3 C749.0,564.3 750.5,559.8 752.9,557.9 C755.3,556.0 759.0,554.9 761.4,553.6 C763.8,552.3 764.7,551.2 767.1,550.0 C769.5,548.8 772.8,547.2 775.7,546.1 C778.6,545.0 781.6,544.4 784.3,543.6 C787.0,542.8 789.6,542.0 792.1,541.4 C794.6,540.8 795.7,540.7 799.3,540.3 C802.9,539.9 809.3,539.3 813.6,538.9 C817.9,538.5 820.7,538.3 825.0,537.9 C829.3,537.5 835.5,537.1 839.3,536.4 C843.1,535.7 844.6,534.3 847.9,533.6 C851.2,532.9 856.0,533.1 859.3,532.1 C862.6,531.1 864.8,529.4 867.9,527.9 C871.0,526.4 875.0,524.0 877.9,522.9 C880.8,521.8 882.8,521.8 885.0,521.0 C887.2,520.2 889.0,518.9 891.4,518.3 C893.8,517.7 897.0,517.8 899.3,517.4 C901.6,517.0 903.1,516.3 905.0,516.1 C906.9,515.9 908.3,516.6 910.7,516.1 C913.1,515.6 916.3,514.0 919.3,512.9 C922.3,511.8 925.9,511.1 928.6,509.7 C931.3,508.3 932.9,505.7 935.7,504.7 C938.6,503.7 941.7,504.0 945.7,503.6 C949.8,503.2 956.4,502.6 960.0,502.1 C963.6,501.6 963.8,501.1 967.1,500.7 C970.4,500.3 976.4,500.6 980.0,500.0 C983.6,499.4 985.5,498.0 988.6,496.9 C991.7,495.8 995.8,494.7 998.6,493.6 C1001.5,492.5 1002.6,491.3 1005.7,490.4 C1008.8,489.4 1013.3,487.8 1017.1,487.9 C1020.9,488.0 1025.0,490.3 1028.6,491.1 C1032.2,491.9 1035.3,492.3 1038.6,492.9 C1041.9,493.5 1044.9,493.9 1048.6,494.6 C1052.3,495.3 1057.5,496.6 1060.7,497.1 C1063.9,497.6 1065.3,496.9 1067.9,497.4 C1070.5,497.9 1073.6,499.2 1076.4,500.0 C1079.2,500.8 1081.4,501.6 1085.0,502.1 C1088.6,502.7 1093.9,503.1 1097.9,503.3 C1102.0,503.6 1104.1,503.5 1109.3,503.6 C1114.5,503.7 1124.5,503.4 1129.3,503.9 C1134.1,504.4 1134.6,505.6 1137.9,506.4 C1141.2,507.2 1145.0,508.2 1149.3,508.9 C1153.6,509.6 1159.3,509.9 1163.6,510.7 C1167.9,511.5 1170.6,512.9 1175.0,513.6 C1179.4,514.3 1186.1,514.5 1190.0,515.0 C1193.9,515.5 1195.8,516.5 1198.6,516.9 C1201.4,517.3 1203.8,516.8 1207.1,517.4 C1210.4,518.0 1214.8,519.5 1218.6,520.3 C1222.4,521.0 1226.9,521.3 1230.0,521.9 C1233.1,522.5 1234.0,523.5 1237.1,524.0 C1240.2,524.5 1244.1,524.4 1248.6,524.7 C1253.1,525.1 1259.8,525.7 1264.3,526.1 C1268.8,526.5 1271.4,526.8 1275.7,527.1 C1280.0,527.4 1286.0,527.5 1290.0,527.9 C1294.0,528.3 1297.2,529.3 1300.0,529.7 C1302.8,530.1 1304.0,529.9 1307.1,530.3 C1310.2,530.7 1315.5,531.7 1318.6,532.1 C1321.7,532.5 1323.3,532.2 1325.7,532.6 C1328.1,533.0 1329.2,533.6 1333.2,534.2 C1337.2,534.8 1345.4,535.5 1349.5,536.3 C1353.6,537.1 1354.5,538.3 1357.7,539.0 C1360.9,539.7 1364.5,540.1 1368.6,540.6 C1372.7,541.1 1379.0,541.5 1382.2,542.0 C1385.4,542.5 1384.9,543.3 1387.6,543.8 C1390.3,544.2 1393.5,544.4 1398.5,544.7 C1403.5,545.0 1411.9,545.6 1417.6,545.8 C1423.3,546.0 1428.7,545.7 1432.5,546.1 C1436.3,546.5 1437.1,547.4 1440.7,548.3 C1444.3,549.2 1450.7,550.8 1454.3,551.5 C1457.9,552.2 1461.1,552.4 1462.5,552.6" fill="none" stroke="#3b9be8" stroke-width="1.9" stroke-linejoin="round" stroke-linecap="round"/>
<path d="M410.0,458.9 H1464.5 V671.2 H410.0 Z" fill="none" stroke="#8a8a8a" stroke-width="1.3"/>
</svg>
<svg width="18" height="18" style="position:absolute;left:399.6px;top:79.3px"><circle cx="9" cy="9" r="6.6" fill="none" stroke="#3a3a3a" stroke-width="1.3"/><path d="M9,5.2 V9.3 L11.8,11.3" fill="none" stroke="#3a3a3a" stroke-width="1.2"/></svg>
<svg width="12" height="12" style="position:absolute;left:1469px;top:65.6px"><path d="M0.75,3.4 V0.75 H3.2 M6.4,0.75 H8.9 V3.4 M8.9,6.1 V8.7 H6.4 M3.2,8.7 H0.75 V6.1" fill="none" stroke="#333" stroke-width="1.5"/></svg>
<div style="position:absolute;left:390px;top:367.8px;width:11.5px;height:2px;background:#e53935"></div>
<svg width="18" height="18" style="position:absolute;left:399.6px;top:423.3px"><circle cx="9" cy="9" r="6.6" fill="none" stroke="#3a3a3a" stroke-width="1.3"/><path d="M9,5.2 V9.3 L11.8,11.3" fill="none" stroke="#3a3a3a" stroke-width="1.2"/></svg>
<svg width="12" height="12" style="position:absolute;left:1469px;top:409.6px"><path d="M0.75,3.4 V0.75 H3.2 M6.4,0.75 H8.9 V3.4 M8.9,6.1 V8.7 H6.4 M3.2,8.7 H0.75 V6.1" fill="none" stroke="#333" stroke-width="1.5"/></svg>
<div style="position:absolute;left:390px;top:711.8px;width:11.5px;height:2px;background:#2e8de6"></div><svg width="1500" height="735" style="position:absolute;left:0;top:0"><text x="14.89" y="25.10" font-size="14.20" font-weight="normal" fill="#e6ebf2" textLength="51.69" lengthAdjust="spacingAndGlyphs">Sensors</text>
<text x="81.89" y="24.00" font-size="12.50" font-weight="normal" fill="#e6ebf2" textLength="7.32" lengthAdjust="spacingAndGlyphs">&gt;</text>
<text x="100.89" y="25.10" font-size="14.20" font-weight="bold" fill="#ffffff" textLength="63.90" lengthAdjust="spacingAndGlyphs">Sensor T1</text>
<text x="17.68" y="70.00" font-size="12.50" font-weight="normal" fill="#3d3d3d" textLength="88.32" lengthAdjust="spacingAndGlyphs">Sensor settings</text>
<text x="39.05" y="104.70" font-size="12.50" font-weight="normal" fill="#3d3d3d" textLength="132.27" lengthAdjust="spacingAndGlyphs">High temperature alarm</text>
<text x="20.26" y="131.00" font-size="8.90" font-weight="normal" fill="#8a8a8a" textLength="128.32" lengthAdjust="spacingAndGlyphs">High temperature threshold, °C</text>
<text x="20.26" y="149.70" font-size="12.50" font-weight="normal" fill="#3d3d3d" textLength="14.27" lengthAdjust="spacingAndGlyphs">30</text>
<text x="39.05" y="206.80" font-size="12.50" font-weight="normal" fill="#3d3d3d" textLength="109.85" lengthAdjust="spacingAndGlyphs">Low humidity alarm</text>
<text x="20.05" y="232.80" font-size="8.90" font-weight="normal" fill="#8a8a8a" textLength="108.90" lengthAdjust="spacingAndGlyphs">Low humidity threshold, %</text>
<text x="20.05" y="251.20" font-size="12.50" font-weight="normal" fill="#3d3d3d" textLength="14.16" lengthAdjust="spacingAndGlyphs">45</text>
<text x="19.89" y="288.20" font-size="8.90" font-weight="normal" fill="#8a8a8a" textLength="34.85" lengthAdjust="spacingAndGlyphs">Latitude</text>
<text x="19.89" y="306.90" font-size="12.50" font-weight="normal" fill="#3d3d3d" textLength="60.27" lengthAdjust="spacingAndGlyphs">34.015672</text>
<text x="19.89" y="342.80" font-size="8.90" font-weight="normal" fill="#8a8a8a" textLength="41.90" lengthAdjust="spacingAndGlyphs">Longitude</text>
<text x="20.21" y="361.30" font-size="12.50" font-weight="normal" fill="#3d3d3d" textLength="56.16" lengthAdjust="spacingAndGlyphs">-118.4497</text>
<text x="391.26" y="70.00" font-size="12.30" font-weight="normal" fill="#3d3d3d" textLength="71.74" lengthAdjust="spacingAndGlyphs">Temperature</text>
<text x="421.26" y="92.00" font-size="11.20" font-weight="normal" fill="#4a4a4a" textLength="103.69" lengthAdjust="spacingAndGlyphs">Realtime - last 7 days</text>
<text x="391.26" y="414.00" font-size="12.30" font-weight="normal" fill="#3d3d3d" textLength="50.74" lengthAdjust="spacingAndGlyphs">Humidity</text>
<text x="421.26" y="436.00" font-size="11.20" font-weight="normal" fill="#4a4a4a" textLength="103.69" lengthAdjust="spacingAndGlyphs">Realtime - last 7 days</text>
<text x="398.60" y="337.60" font-size="8.30" font-weight="normal" fill="#6a6a6a" textLength="43.79" lengthAdjust="spacingAndGlyphs">Oct 01 12:00</text>
<text x="473.56" y="337.60" font-size="8.30" font-weight="normal" fill="#6a6a6a" textLength="43.79" lengthAdjust="spacingAndGlyphs">Oct 02 00:00</text>
<text x="548.51" y="337.60" font-size="8.30" font-weight="normal" fill="#6a6a6a" textLength="44.69" lengthAdjust="spacingAndGlyphs">Oct 02 12:00</text>
<text x="624.36" y="337.60" font-size="8.30" font-weight="normal" fill="#6a6a6a" textLength="43.79" lengthAdjust="spacingAndGlyphs">Oct 03 00:00</text>
<text x="699.31" y="337.60" font-size="8.30" font-weight="normal" fill="#6a6a6a" textLength="43.79" lengthAdjust="spacingAndGlyphs">Oct 03 12:00</text>
<text x="774.26" y="337.60" font-size="8.30" font-weight="normal" fill="#6a6a6a" textLength="44.69" lengthAdjust="spacingAndGlyphs">Oct 04 00:00</text>
<text x="850.11" y="337.60" font-size="8.30" font-weight="normal" fill="#6a6a6a" textLength="43.79" lengthAdjust="spacingAndGlyphs">Oct 04 12:00</text>
<text x="925.06" y="337.60" font-size="8.30" font-weight="normal" fill="#6a6a6a" textLength="43.79" lengthAdjust="spacingAndGlyphs">Oct 05 00:00</text>
<text x="1000.01" y="337.60" font-size="8.30" font-weight="normal" fill="#6a6a6a" textLength="44.69" lengthAdjust="spacingAndGlyphs">Oct 05 12:00</text>
<text x="1074.96" y="337.60" font-size="8.30" font-weight="normal" fill="#6a6a6a" textLength="44.69" lengthAdjust="spacingAndGlyphs">Oct 06 00:00</text>
<text x="1150.82" y="337.60" font-size="8.30" font-weight="normal" fill="#6a6a6a" textLength="43.79" lengthAdjust="spacingAndGlyphs">Oct 06 12:00</text>
<text x="1225.77" y="337.60" font-size="8.30" font-weight="normal" fill="#6a6a6a" textLength="44.69" lengthAdjust="spacingAndGlyphs">Oct 07 00:00</text>
<text x="1300.72" y="337.60" font-size="8.30" font-weight="normal" fill="#6a6a6a" textLength="44.69" lengthAdjust="spacingAndGlyphs">Oct 07 12:00</text>
<text x="1376.57" y="337.60" font-size="8.30" font-weight="normal" fill="#6a6a6a" textLength="43.79" lengthAdjust="spacingAndGlyphs">Oct 08 00:00</text>
<text x="398.60" y="681.90" font-size="8.30" font-weight="normal" fill="#6a6a6a" textLength="43.79" lengthAdjust="spacingAndGlyphs">Oct 01 12:00</text>
<text x="473.56" y="681.90" font-size="8.30" font-weight="normal" fill="#6a6a6a" textLength="43.79" lengthAdjust="spacingAndGlyphs">Oct 02 00:00</text>
<text x="548.51" y="681.90" font-size="8.30" font-weight="normal" fill="#6a6a6a" textLength="44.69" lengthAdjust="spacingAndGlyphs">Oct 02 12:00</text>
<text x="624.36" y="681.90" font-size="8.30" font-weight="normal" fill="#6a6a6a" textLength="43.79" lengthAdjust="spacingAndGlyphs">Oct 03 00:00</text>
<text x="699.31" y="681.90" font-size="8.30" font-weight="normal" fill="#6a6a6a" textLength="43.79" lengthAdjust="spacingAndGlyphs">Oct 03 12:00</text>
<text x="774.26" y="681.90" font-size="8.30" font-weight="normal" fill="#6a6a6a" textLength="44.69" lengthAdjust="spacingAndGlyphs">Oct 04 00:00</text>
<text x="850.11" y="681.90" font-size="8.30" font-weight="normal" fill="#6a6a6a" textLength="43.79" lengthAdjust="spacingAndGlyphs">Oct 04 12:00</text>
<text x="925.06" y="681.90" font-size="8.30" font-weight="normal" fill="#6a6a6a" textLength="43.79" lengthAdjust="spacingAndGlyphs">Oct 05 00:00</text>
<text x="1000.01" y="681.90" font-size="8.30" font-weight="normal" fill="#6a6a6a" textLength="44.69" lengthAdjust="spacingAndGlyphs">Oct 05 12:00</text>
<text x="1074.96" y="681.90" font-size="8.30" font-weight="normal" fill="#6a6a6a" textLength="44.69" lengthAdjust="spacingAndGlyphs">Oct 06 00:00</text>
<text x="1150.82" y="681.90" font-size="8.30" font-weight="normal" fill="#6a6a6a" textLength="43.79" lengthAdjust="spacingAndGlyphs">Oct 06 12:00</text>
<text x="1225.77" y="681.90" font-size="8.30" font-weight="normal" fill="#6a6a6a" textLength="44.69" lengthAdjust="spacingAndGlyphs">Oct 07 00:00</text>
<text x="1300.72" y="681.90" font-size="8.30" font-weight="normal" fill="#6a6a6a" textLength="44.69" lengthAdjust="spacingAndGlyphs">Oct 07 12:00</text>
<text x="1376.57" y="681.90" font-size="8.30" font-weight="normal" fill="#6a6a6a" textLength="43.79" lengthAdjust="spacingAndGlyphs">Oct 08 00:00</text>
<text x="387.84" y="117.00" font-size="8.00" font-weight="normal" fill="#6a6a6a" textLength="19.69" lengthAdjust="spacingAndGlyphs">35 °C</text>
<text x="387.84" y="147.29" font-size="8.00" font-weight="normal" fill="#6a6a6a" textLength="19.69" lengthAdjust="spacingAndGlyphs">30 °C</text>
<text x="387.84" y="177.57" font-size="8.00" font-weight="normal" fill="#6a6a6a" textLength="19.69" lengthAdjust="spacingAndGlyphs">25 °C</text>
<text x="387.84" y="207.86" font-size="8.00" font-weight="normal" fill="#6a6a6a" textLength="19.69" lengthAdjust="spacingAndGlyphs">20 °C</text>
<text x="386.94" y="238.14" font-size="8.00" font-weight="normal" fill="#6a6a6a" textLength="20.59" lengthAdjust="spacingAndGlyphs">15 °C</text>
<text x="386.94" y="268.43" font-size="8.00" font-weight="normal" fill="#6a6a6a" textLength="20.59" lengthAdjust="spacingAndGlyphs">10 °C</text>
<text x="391.89" y="298.71" font-size="8.00" font-weight="normal" fill="#6a6a6a" textLength="15.64" lengthAdjust="spacingAndGlyphs">5 °C</text>
<text x="392.79" y="329.00" font-size="8.00" font-weight="normal" fill="#6a6a6a" textLength="14.74" lengthAdjust="spacingAndGlyphs">0 °C</text>
<text x="388.21" y="461.90" font-size="8.00" font-weight="normal" fill="#6a6a6a" textLength="16.79" lengthAdjust="spacingAndGlyphs">80 %</text>
<text x="387.31" y="488.44" font-size="8.00" font-weight="normal" fill="#6a6a6a" textLength="17.69" lengthAdjust="spacingAndGlyphs">70 %</text>
<text x="388.21" y="514.97" font-size="8.00" font-weight="normal" fill="#6a6a6a" textLength="16.79" lengthAdjust="spacingAndGlyphs">60 %</text>
<text x="388.21" y="541.51" font-size="8.00" font-weight="normal" fill="#6a6a6a" textLength="16.79" lengthAdjust="spacingAndGlyphs">50 %</text>
<text x="388.21" y="568.05" font-size="8.00" font-weight="normal" fill="#6a6a6a" textLength="16.79" lengthAdjust="spacingAndGlyphs">40 %</text>
<text x="387.31" y="594.59" font-size="8.00" font-weight="normal" fill="#6a6a6a" textLength="17.69" lengthAdjust="spacingAndGlyphs">30 %</text>
<text x="388.21" y="621.12" font-size="8.00" font-weight="normal" fill="#6a6a6a" textLength="16.79" lengthAdjust="spacingAndGlyphs">20 %</text>
<text x="387.31" y="647.66" font-size="8.00" font-weight="normal" fill="#6a6a6a" textLength="17.69" lengthAdjust="spacingAndGlyphs">10 %</text>
<text x="393.05" y="674.20" font-size="8.00" font-weight="normal" fill="#6a6a6a" textLength="11.95" lengthAdjust="spacingAndGlyphs">0 %</text>
<text x="412.00" y="371.80" font-size="10.00" font-weight="normal" fill="#3d3d3d" textLength="53.00" lengthAdjust="spacingAndGlyphs">Temperature</text>
<text x="411.10" y="716.00" font-size="10.00" font-weight="normal" fill="#3d3d3d" textLength="37.74" lengthAdjust="spacingAndGlyphs">Humidity</text>
<text x="1366.00" y="357.00" font-size="9.60" font-weight="bold" fill="#ff6a3d" textLength="16.16" lengthAdjust="spacingAndGlyphs">min</text>
<text x="1411.26" y="357.00" font-size="9.60" font-weight="bold" fill="#ff6a3d" textLength="17.74" lengthAdjust="spacingAndGlyphs">max</text>
<text x="1462.00" y="357.00" font-size="9.60" font-weight="bold" fill="#ff6a3d" textLength="14.95" lengthAdjust="spacingAndGlyphs">avg</text>
<text x="1351.26" y="371.80" font-size="9.50" font-weight="normal" fill="#3d3d3d" textLength="30.69" lengthAdjust="spacingAndGlyphs">20.3 °C</text>
<text x="1399.26" y="371.80" font-size="9.50" font-weight="normal" fill="#3d3d3d" textLength="29.74" lengthAdjust="spacingAndGlyphs">33.8 °C</text>
<text x="1446.26" y="371.80" font-size="9.50" font-weight="normal" fill="#3d3d3d" textLength="30.69" lengthAdjust="spacingAndGlyphs">26.8 °C</text>
<text x="1387.00" y="701.20" font-size="9.60" font-weight="bold" fill="#ff6a3d" textLength="15.95" lengthAdjust="spacingAndGlyphs">min</text>
<text x="1422.00" y="701.20" font-size="9.60" font-weight="bold" fill="#ff6a3d" textLength="17.95" lengthAdjust="spacingAndGlyphs">max</text>
<text x="1462.00" y="701.20" font-size="9.60" font-weight="bold" fill="#ff6a3d" textLength="14.95" lengthAdjust="spacingAndGlyphs">avg</text>
<text x="1382.84" y="715.80" font-size="9.50" font-weight="normal" fill="#3d3d3d" textLength="20.11" lengthAdjust="spacingAndGlyphs">40 %</text>
<text x="1420.05" y="715.80" font-size="9.50" font-weight="normal" fill="#3d3d3d" textLength="19.90" lengthAdjust="spacingAndGlyphs">69 %</text>
<text x="1457.05" y="715.80" font-size="9.50" font-weight="normal" fill="#3d3d3d" textLength="19.90" lengthAdjust="spacingAndGlyphs">56 %</text>
<text x="1345.26" y="727.20" font-size="9.60" font-weight="normal" fill="#3d3d3d" textLength="48.74" lengthAdjust="spacingAndGlyphs">Powered by</text>
<text x="1397.00" y="727.20" font-size="9.60" font-weight="bold" fill="#2f78d4" textLength="83.00" lengthAdjust="spacingAndGlyphs">Thingsboard v.3.3.2</text></svg>
<div style="position:absolute;left:14px;top:397.5px;width:353px;height:324.5px;overflow:hidden"><svg width="353" height="325" style="position:absolute;left:0;top:0"><rect width="353" height="325" fill="#f4f2ee"/>
<path d="M0.0,44.9 L34.4,28.4 L62.8,13.5 L86.0,0.0" fill="none" stroke="#ddd8c0" stroke-width="4.4" stroke-linejoin="round" stroke-linecap="round"/>
<path d="M0.0,44.9 L34.4,28.4 L62.8,13.5 L86.0,0.0" fill="none" stroke="#f7f5ee" stroke-width="2.6" stroke-linejoin="round" stroke-linecap="round"/>
<path d="M0.0,55.0 L33.7,39.5 L67.3,17.0 L97.0,-2.0" fill="none" stroke="#ddd8c0" stroke-width="4.4" stroke-linejoin="round" stroke-linecap="round"/>
<path d="M0.0,55.0 L33.7,39.5 L67.3,17.0 L97.0,-2.0" fill="none" stroke="#f7f5ee" stroke-width="2.6" stroke-linejoin="round" stroke-linecap="round"/>
<path d="M27.0,70.3 L53.9,62.8 L89.8,38.9 L125.0,17.0" fill="none" stroke="#ddd8c0" stroke-width="4.4" stroke-linejoin="round" stroke-linecap="round"/>
<path d="M27.0,70.3 L53.9,62.8 L89.8,38.9 L125.0,17.0" fill="none" stroke="#f7f5ee" stroke-width="2.6" stroke-linejoin="round" stroke-linecap="round"/>
<path d="M56.9,65.8 L92.0,43.4" fill="none" stroke="#ddd8c0" stroke-width="4.4" stroke-linejoin="round" stroke-linecap="round"/>
<path d="M56.9,65.8 L92.0,43.4" fill="none" stroke="#f7f5ee" stroke-width="2.6" stroke-linejoin="round" stroke-linecap="round"/>
<path d="M61.3,71.8 L97.3,49.4" fill="none" stroke="#ddd8c0" stroke-width="4.4" stroke-linejoin="round" stroke-linecap="round"/>
<path d="M61.3,71.8 L97.3,49.4" fill="none" stroke="#f7f5ee" stroke-width="2.6" stroke-linejoin="round" stroke-linecap="round"/>
<path d="M65.8,77.8 L101.8,55.4" fill="none" stroke="#ddd8c0" stroke-width="4.4" stroke-linejoin="round" stroke-linecap="round"/>
<path d="M65.8,77.8 L101.8,55.4" fill="none" stroke="#f7f5ee" stroke-width="2.6" stroke-linejoin="round" stroke-linecap="round"/>
<path d="M0.0,100.0 L22.4,89.8 L64.3,64.3 L125.0,30.0" fill="none" stroke="#ddd8c0" stroke-width="4.4" stroke-linejoin="round" stroke-linecap="round"/>
<path d="M0.0,100.0 L22.4,89.8 L64.3,64.3 L125.0,30.0" fill="none" stroke="#f7f5ee" stroke-width="2.6" stroke-linejoin="round" stroke-linecap="round"/>
<path d="M27.0,104.7 L62.8,83.8 L125.0,47.0" fill="none" stroke="#ddd8c0" stroke-width="4.4" stroke-linejoin="round" stroke-linecap="round"/>
<path d="M27.0,104.7 L62.8,83.8 L125.0,47.0" fill="none" stroke="#f7f5ee" stroke-width="2.6" stroke-linejoin="round" stroke-linecap="round"/>
<path d="M0.0,120.0 L73.0,80.0" fill="none" stroke="#ddd8c0" stroke-width="4.4" stroke-linejoin="round" stroke-linecap="round"/>
<path d="M0.0,120.0 L73.0,80.0" fill="none" stroke="#f7f5ee" stroke-width="2.6" stroke-linejoin="round" stroke-linecap="round"/>
<path d="M0.0,146.0 L55.4,104.0 L75.0,92.0" fill="none" stroke="#ddd8c0" stroke-width="4.4" stroke-linejoin="round" stroke-linecap="round"/>
<path d="M0.0,146.0 L55.4,104.0 L75.0,92.0" fill="none" stroke="#f7f5ee" stroke-width="2.6" stroke-linejoin="round" stroke-linecap="round"/>
<path d="M52.0,0.0 L62.8,21.0" fill="none" stroke="#ddd8c0" stroke-width="4.4" stroke-linejoin="round" stroke-linecap="round"/>
<path d="M52.0,0.0 L62.8,21.0" fill="none" stroke="#f7f5ee" stroke-width="2.6" stroke-linejoin="round" stroke-linecap="round"/>
<path d="M22.4,56.9 L38.9,77.8 L49.4,89.8" fill="none" stroke="#ddd8c0" stroke-width="4.4" stroke-linejoin="round" stroke-linecap="round"/>
<path d="M22.4,56.9 L38.9,77.8 L49.4,89.8" fill="none" stroke="#f7f5ee" stroke-width="2.6" stroke-linejoin="round" stroke-linecap="round"/>
<path d="M62.8,15.0 L83.8,38.9 L95.8,56.9 L104.0,70.0" fill="none" stroke="#ddd8c0" stroke-width="4.4" stroke-linejoin="round" stroke-linecap="round"/>
<path d="M62.8,15.0 L83.8,38.9 L95.8,56.9 L104.0,70.0" fill="none" stroke="#f7f5ee" stroke-width="2.6" stroke-linejoin="round" stroke-linecap="round"/>
<path d="M0.0,59.9 L12.0,77.8 L24.0,95.8" fill="none" stroke="#ddd8c0" stroke-width="4.4" stroke-linejoin="round" stroke-linecap="round"/>
<path d="M0.0,59.9 L12.0,77.8 L24.0,95.8" fill="none" stroke="#f7f5ee" stroke-width="2.6" stroke-linejoin="round" stroke-linecap="round"/>
<path d="M20.0,94.0 L36.0,106.0 L32.0,110.0 L18.0,98.0" fill="none" stroke="#ddd8c0" stroke-width="4.4" stroke-linejoin="round" stroke-linecap="round"/>
<path d="M20.0,94.0 L36.0,106.0 L32.0,110.0 L18.0,98.0" fill="none" stroke="#f7f5ee" stroke-width="2.6" stroke-linejoin="round" stroke-linecap="round"/>
<path d="M120.0,20.0 L132.0,40.0" fill="none" stroke="#ddd8c0" stroke-width="4.4" stroke-linejoin="round" stroke-linecap="round"/>
<path d="M120.0,20.0 L132.0,40.0" fill="none" stroke="#f7f5ee" stroke-width="2.6" stroke-linejoin="round" stroke-linecap="round"/>
<path d="M8.0,128.0 L20.0,150.0 L12.0,165.0" fill="none" stroke="#ddd8c0" stroke-width="4.4" stroke-linejoin="round" stroke-linecap="round"/>
<path d="M8.0,128.0 L20.0,150.0 L12.0,165.0" fill="none" stroke="#f7f5ee" stroke-width="2.6" stroke-linejoin="round" stroke-linecap="round"/>
<path d="M2.0,88.0 L30.0,112.0 L40.0,150.0" fill="none" stroke="#c9a08f" stroke-width="0.9" stroke-dasharray="1.2,1.6"/>
<polygon points="172.0,0.0 226.0,0.0 50.0,176.0 23.0,149.0" fill="#e0dfdd" />
<polygon points="262.0,0.0 281.0,0.0 0.0,281.0 0.0,262.0" fill="#dadada" />
<path d="M233.0,0.0 L0.0,233.0" fill="none" stroke="#dadada" stroke-width="2.4" />
<path d="M311.0,0.0 L0.0,311.0" fill="none" stroke="#dadada" stroke-width="2.2" />
<path d="M345.0,0.0 L20.0,325.0" fill="none" stroke="#dadada" stroke-width="2.0" />
<path d="M46.6,187.5 L63.6,203.5" fill="none" stroke="#dadada" stroke-width="2.0" />
<path d="M70.5,211.4 L88.6,226.0" fill="none" stroke="#dadada" stroke-width="2.0" />
<path d="M216.0,17.0 L230.0,31.0" fill="none" stroke="#dadada" stroke-width="2.0" />
<path d="M239.0,40.0 L255.0,56.0" fill="none" stroke="#dadada" stroke-width="2.0" />
<path d="M267.0,9.0 L285.0,25.0" fill="none" stroke="#dadada" stroke-width="2.0" />
<path d="M9.0,275.0 L25.0,290.0" fill="none" stroke="#dadada" stroke-width="2.0" />
<path d="M131.8,212.5 L150.0,239.8" fill="none" stroke="#dadada" stroke-width="2.0" />
<path d="M97.7,249.0 L111.4,267.0" fill="none" stroke="#dadada" stroke-width="2.0" />
<polygon points="297.0,66.5 331.0,35.5 344.6,24.4 353.0,20.0 353.0,115.0 300.0,137.5 309.0,163.0 249.0,163.0 247.0,137.5 287.0,111.0 292.5,91.0" fill="#d2dfb8" />
<polygon points="0.0,178.0 9.0,180.0 12.0,200.0 0.0,204.0" fill="#d2dfb8" />
<path d="M300.0,95.0 L353.0,60.0" fill="none" stroke="#c6a48c" stroke-width="0.9" stroke-dasharray="1.3,1.7"/>
<path d="M292.0,125.0 L353.0,95.0" fill="none" stroke="#c6a48c" stroke-width="0.9" stroke-dasharray="1.3,1.7"/>
<path d="M300.0,100.0 L330.0,150.0" fill="none" stroke="#c6a48c" stroke-width="0.9" stroke-dasharray="1.3,1.7"/>
<path d="M320.0,85.0 L350.0,130.0" fill="none" stroke="#c6a48c" stroke-width="0.9" stroke-dasharray="1.3,1.7"/>
<polygon points="35.5,45.0 60.0,22.0 73.0,40.0 48.0,62.0" fill="#d8d3d1" />
<polygon points="0.0,75.0 17.0,62.0 25.5,74.0 9.0,86.5" fill="#d8d3d1" />
<polygon points="33.0,87.0 51.0,73.0 64.0,87.0 46.0,101.0" fill="#d8d3d1" />
<polygon points="33.0,12.0 45.0,2.0 51.0,16.0 39.0,26.6" fill="#d8d3d1" />
<polygon points="76.3,13.5 89.8,4.5 97.3,16.5 83.8,26.9" fill="#d8d3d1" />
<polygon points="62.0,0.0 80.0,0.0 76.0,9.0 64.0,9.0" fill="#d8d3d1" />
<polygon points="0.0,13.0 6.6,13.0 6.6,44.0 0.0,44.0" fill="#d8d3d1" />
<polygon points="99.8,44.0 118.0,31.0 133.0,45.0 115.0,57.6" fill="#d8d3d1" />
<polygon points="137.5,14.0 150.0,2.0 175.0,24.0 160.0,37.7" fill="#d8d3d1" />
<polygon points="139.6,47.0 150.0,35.5 159.6,44.0 149.0,55.4" fill="#d8d3d1" />
<polygon points="82.3,86.3 91.3,80.6 107.6,113.2 101.0,118.9" fill="#d8d3d1" />
<polygon points="28.8,133.0 57.6,108.6 64.3,117.0 35.5,144.0" fill="#d8d3d1" />
<polygon points="13.0,150.0 20.0,139.7 37.7,155.0 30.0,163.0" fill="#d8d3d1" />
<polygon points="16.5,143.0 21.0,140.0 52.0,171.5 47.0,175.0" fill="#d8d3d1" />
<polygon points="7.0,152.7 14.0,149.0 38.8,178.6 31.8,182.0" fill="#d8d3d1" />
<polygon points="0.0,162.0 7.0,158.6 30.6,194.0 23.5,197.4" fill="#d8d3d1" />
<polygon points="0.0,205.0 20.0,190.0 24.0,196.0 0.0,216.0" fill="#d8d3d1" />
<polygon points="280.0,60.0 304.7,37.7 307.0,41.0 282.5,64.3" fill="#d8d3d1" />
<polygon points="292.5,64.3 322.4,35.5 325.7,38.8 295.8,66.5" fill="#d8d3d1" />
<polygon points="284.7,74.0 289.0,71.0 292.5,76.0 288.0,79.0" fill="#d8d3d1" />
<polygon points="244.8,86.0 262.0,71.0 274.7,80.0 264.0,90.0 258.0,86.0 250.0,93.0" fill="#d8d3d1" />
<polygon points="218.0,124.0 243.7,101.0 252.5,111.0 227.0,135.3" fill="#d8d3d1" />
<polygon points="161.3,193.3 184.4,180.1 200.8,211.4 177.8,224.6" fill="#d8d3d1" />
<polygon points="68.0,276.0 95.5,249.0 113.6,276.0 86.0,299.0" fill="#d8d3d1" />
<polygon points="104.5,250.0 112.0,245.0 122.0,262.0 114.0,267.0" fill="#d8d3d1" />
<polygon points="116.0,244.0 124.0,239.0 134.0,256.0 126.0,262.0" fill="#d8d3d1" />
<polygon points="126.0,236.0 134.0,231.0 147.7,250.0 140.0,256.0" fill="#d8d3d1" />
<polygon points="186.0,232.0 204.0,226.0 210.0,243.0 192.0,249.0" fill="#d8d3d1" />
<polygon points="208.0,214.0 216.0,211.0 220.0,224.0 212.0,227.0" fill="#d8d3d1" />
<polygon points="236.0,203.0 262.0,194.0 271.0,208.0 244.0,217.0" fill="#d8d3d1" />
<polygon points="276.0,176.0 298.0,167.0 301.0,181.0 280.0,187.5" fill="#d8d3d1" />
<polygon points="321.0,184.0 330.0,176.0 342.0,196.0 334.0,206.0" fill="#d8d3d1" />
<polygon points="318.0,140.0 340.0,128.0 353.0,133.0 353.0,150.0 330.0,158.0" fill="#d8d3d1" />
<polygon points="226.0,168.0 232.0,166.0 238.0,184.0 232.0,186.0" fill="#d8d3d1" />
<polygon points="112.0,290.0 124.0,284.0 132.0,298.0 120.0,304.0" fill="#d8d3d1" />
<rect x="11.5" y="72" width="4" height="4" fill="#f4f2ee" transform="rotate(-35 13.5 74)"/>
<rect x="45.5" y="84.5" width="4" height="4" fill="#f4f2ee" transform="rotate(-35 47.5 86.5)"/>
<rect x="39" y="10" width="3.5" height="4" fill="#f4f2ee" transform="rotate(-35 41 12)"/>
<defs><pattern id="houses" width="7" height="7" patternUnits="userSpaceOnUse" patternTransform="rotate(-29)"><rect width="7" height="7" fill="#ece9e1"/><rect x="0.6" y="0.6" width="5" height="4.8" rx="1" fill="#d8d2d0"/></pattern></defs>
<polygon points="100.0,325.0 125.0,300.0 182.0,264.0 195.0,248.0 274.6,203.0 353.0,168.0 353.0,325.0" fill="url(#houses)" />
<polygon points="272.0,209.0 300.0,192.0 353.0,163.0 353.0,205.0 322.0,222.0 292.0,238.0" fill="#f4f2ee" />
<path d="M285.0,215.0 L320.0,196.0" fill="none" stroke="#ddd8c0" stroke-width="3.6" stroke-linejoin="round" stroke-linecap="round"/>
<path d="M285.0,215.0 L320.0,196.0" fill="none" stroke="#f7f5ee" stroke-width="1.8" stroke-linejoin="round" stroke-linecap="round"/>
<path d="M290.0,224.0 L326.0,204.0" fill="none" stroke="#ddd8c0" stroke-width="3.6" stroke-linejoin="round" stroke-linecap="round"/>
<path d="M290.0,224.0 L326.0,204.0" fill="none" stroke="#f7f5ee" stroke-width="1.8" stroke-linejoin="round" stroke-linecap="round"/>
<path d="M295.0,232.0 L332.0,212.0" fill="none" stroke="#ddd8c0" stroke-width="3.6" stroke-linejoin="round" stroke-linecap="round"/>
<path d="M295.0,232.0 L332.0,212.0" fill="none" stroke="#f7f5ee" stroke-width="1.8" stroke-linejoin="round" stroke-linecap="round"/>
<path d="M300.0,204.0 L315.0,230.0" fill="none" stroke="#ddd8c0" stroke-width="3.6" stroke-linejoin="round" stroke-linecap="round"/>
<path d="M300.0,204.0 L315.0,230.0" fill="none" stroke="#f7f5ee" stroke-width="1.8" stroke-linejoin="round" stroke-linecap="round"/>
<path d="M322.0,190.0 L337.0,216.0" fill="none" stroke="#ddd8c0" stroke-width="3.6" stroke-linejoin="round" stroke-linecap="round"/>
<path d="M322.0,190.0 L337.0,216.0" fill="none" stroke="#f7f5ee" stroke-width="1.8" stroke-linejoin="round" stroke-linecap="round"/>
<polygon points="334.0,188.0 342.0,184.0 352.0,203.0 344.0,207.0" fill="#d8d3d1" />
<path d="M80.0,329.0 L186.0,270.8 L281.8,218.4 L353.0,180.0" fill="none" stroke="#ddd8c0" stroke-width="4.6" stroke-linejoin="round" stroke-linecap="round"/>
<path d="M80.0,329.0 L186.0,270.8 L281.8,218.4 L353.0,180.0" fill="none" stroke="#f7f5ee" stroke-width="2.8" stroke-linejoin="round" stroke-linecap="round"/>
<path d="M150.0,325.0 L298.2,245.4" fill="none" stroke="#ddd8c0" stroke-width="4.6" stroke-linejoin="round" stroke-linecap="round"/>
<path d="M150.0,325.0 L298.2,245.4" fill="none" stroke="#f7f5ee" stroke-width="2.8" stroke-linejoin="round" stroke-linecap="round"/>
<path d="M298.0,262.0 L353.0,227.0" fill="none" stroke="#ddd8c0" stroke-width="4.6" stroke-linejoin="round" stroke-linecap="round"/>
<path d="M298.0,262.0 L353.0,227.0" fill="none" stroke="#f7f5ee" stroke-width="2.8" stroke-linejoin="round" stroke-linecap="round"/>
<path d="M255.0,325.0 L326.7,285.8" fill="none" stroke="#ddd8c0" stroke-width="4.6" stroke-linejoin="round" stroke-linecap="round"/>
<path d="M255.0,325.0 L326.7,285.8" fill="none" stroke="#f7f5ee" stroke-width="2.8" stroke-linejoin="round" stroke-linecap="round"/>
<path d="M320.0,304.0 L353.0,286.0" fill="none" stroke="#ddd8c0" stroke-width="4.6" stroke-linejoin="round" stroke-linecap="round"/>
<path d="M320.0,304.0 L353.0,286.0" fill="none" stroke="#f7f5ee" stroke-width="2.8" stroke-linejoin="round" stroke-linecap="round"/>
<path d="M116.0,295.0 L182.0,260.0" fill="none" stroke="#ddd8c0" stroke-width="4.6" stroke-linejoin="round" stroke-linecap="round"/>
<path d="M116.0,295.0 L182.0,260.0" fill="none" stroke="#f7f5ee" stroke-width="2.8" stroke-linejoin="round" stroke-linecap="round"/>
<path d="M232.4,251.4 L263.8,303.0 L277.0,325.0" fill="none" stroke="#ddd8c0" stroke-width="4.6" stroke-linejoin="round" stroke-linecap="round"/>
<path d="M232.4,251.4 L263.8,303.0 L277.0,325.0" fill="none" stroke="#f7f5ee" stroke-width="2.8" stroke-linejoin="round" stroke-linecap="round"/>
<path d="M275.8,205.0 L335.6,303.0 L348.0,325.0" fill="none" stroke="#ddd8c0" stroke-width="4.6" stroke-linejoin="round" stroke-linecap="round"/>
<path d="M275.8,205.0 L335.6,303.0 L348.0,325.0" fill="none" stroke="#f7f5ee" stroke-width="2.8" stroke-linejoin="round" stroke-linecap="round"/>
<path d="M276.0,276.0 L286.0,292.0" fill="none" stroke="#ddd8c0" stroke-width="4.6" stroke-linejoin="round" stroke-linecap="round"/>
<path d="M276.0,276.0 L286.0,292.0" fill="none" stroke="#f7f5ee" stroke-width="2.8" stroke-linejoin="round" stroke-linecap="round"/>
<path d="M176.0,153.0 L195.0,180.0 L205.0,200.0" fill="none" stroke="#ddd8c0" stroke-width="4.0" stroke-linejoin="round" stroke-linecap="round"/>
<path d="M176.0,153.0 L195.0,180.0 L205.0,200.0" fill="none" stroke="#f7f5ee" stroke-width="2.2" stroke-linejoin="round" stroke-linecap="round"/>
<path d="M144.3,210.3 L154.5,204.6 L170.5,233.0 L161.4,237.5 L144.3,210.3" fill="none" stroke="#ddd8c0" stroke-width="4.0" stroke-linejoin="round" stroke-linecap="round"/>
<path d="M144.3,210.3 L154.5,204.6 L170.5,233.0 L161.4,237.5 L144.3,210.3" fill="none" stroke="#f7f5ee" stroke-width="2.2" stroke-linejoin="round" stroke-linecap="round"/>
<path d="M0.0,171.6 L25.0,201.0" fill="none" stroke="#ddd8c0" stroke-width="4.0" stroke-linejoin="round" stroke-linecap="round"/>
<path d="M0.0,171.6 L25.0,201.0" fill="none" stroke="#f7f5ee" stroke-width="2.2" stroke-linejoin="round" stroke-linecap="round"/>
<path d="M20.0,294.0 L68.0,281.0 L86.0,299.0" fill="none" stroke="#ddd8c0" stroke-width="4.0" stroke-linejoin="round" stroke-linecap="round"/>
<path d="M20.0,294.0 L68.0,281.0 L86.0,299.0" fill="none" stroke="#f7f5ee" stroke-width="2.2" stroke-linejoin="round" stroke-linecap="round"/>
<path d="M353.0,4.0 L300.0,64.0 L291.0,93.0 L273.6,106.5 L242.5,131.0 L240.3,163.0" fill="none" stroke="#ddd8c0" stroke-width="4.0" stroke-linejoin="round" stroke-linecap="round"/>
<path d="M353.0,4.0 L300.0,64.0 L291.0,93.0 L273.6,106.5 L242.5,131.0 L240.3,163.0" fill="none" stroke="#f7f5ee" stroke-width="2.2" stroke-linejoin="round" stroke-linecap="round"/>
<path d="M216.0,133.0 L253.6,106.5 L262.0,112.0 L226.0,140.0" fill="none" stroke="#ddd8c0" stroke-width="4.0" stroke-linejoin="round" stroke-linecap="round"/>
<path d="M216.0,133.0 L253.6,106.5 L262.0,112.0 L226.0,140.0" fill="none" stroke="#f7f5ee" stroke-width="2.2" stroke-linejoin="round" stroke-linecap="round"/>
<path d="M256.0,195.0 L353.0,151.5" fill="none" stroke="#ddd8c0" stroke-width="4.0" stroke-linejoin="round" stroke-linecap="round"/>
<path d="M256.0,195.0 L353.0,151.5" fill="none" stroke="#f7f5ee" stroke-width="2.2" stroke-linejoin="round" stroke-linecap="round"/>
<path d="M276.0,209.0 L353.0,176.0" fill="none" stroke="#ddd8c0" stroke-width="4.0" stroke-linejoin="round" stroke-linecap="round"/>
<path d="M276.0,209.0 L353.0,176.0" fill="none" stroke="#f7f5ee" stroke-width="2.2" stroke-linejoin="round" stroke-linecap="round"/>
<path d="M295.0,142.0 L324.0,205.0" fill="none" stroke="#ddd8c0" stroke-width="4.0" stroke-linejoin="round" stroke-linecap="round"/>
<path d="M295.0,142.0 L324.0,205.0" fill="none" stroke="#f7f5ee" stroke-width="2.2" stroke-linejoin="round" stroke-linecap="round"/>
<path d="M318.0,132.0 L345.0,190.0" fill="none" stroke="#ddd8c0" stroke-width="4.0" stroke-linejoin="round" stroke-linecap="round"/>
<path d="M318.0,132.0 L345.0,190.0" fill="none" stroke="#f7f5ee" stroke-width="2.2" stroke-linejoin="round" stroke-linecap="round"/>
<path d="M300.0,150.0 L353.0,127.0" fill="none" stroke="#ddd8c0" stroke-width="4.0" stroke-linejoin="round" stroke-linecap="round"/>
<path d="M300.0,150.0 L353.0,127.0" fill="none" stroke="#f7f5ee" stroke-width="2.2" stroke-linejoin="round" stroke-linecap="round"/>
<path d="M170.0,250.0 L205.0,232.0 L215.0,246.0 L180.0,268.0" fill="none" stroke="#ddd8c0" stroke-width="4.0" stroke-linejoin="round" stroke-linecap="round"/>
<path d="M170.0,250.0 L205.0,232.0 L215.0,246.0 L180.0,268.0" fill="none" stroke="#f7f5ee" stroke-width="2.2" stroke-linejoin="round" stroke-linecap="round"/>
<path d="M40.0,325.0 L105.0,282.0 L176.0,231.0 L271.4,169.4 L353.0,120.0" fill="none" stroke="#ddd8c0" stroke-width="6.2" stroke-linejoin="round"/>
<path d="M40.0,325.0 L105.0,282.0 L176.0,231.0 L271.4,169.4 L353.0,120.0" fill="none" stroke="#d8df9c" stroke-width="4.4" stroke-linejoin="round"/>
<text x="117.5" y="2.5" font-size="7.6" fill="#62808f" stroke="#f6f4ef" stroke-width="1.6" paint-order="stroke" text-anchor="middle" textLength="24.0" lengthAdjust="spacingAndGlyphs" transform="rotate(0.0 117.5 2.5)">Mackie</text>
<text x="117.5" y="13.5" font-size="7.6" fill="#62808f" stroke="#f6f4ef" stroke-width="1.6" paint-order="stroke" text-anchor="middle" textLength="24.4" lengthAdjust="spacingAndGlyphs" transform="rotate(0.0 117.5 13.5)">College</text>
<text x="117.5" y="24.0" font-size="7.6" fill="#62808f" stroke="#f6f4ef" stroke-width="1.6" paint-order="stroke" text-anchor="middle" textLength="43.2" lengthAdjust="spacingAndGlyphs" transform="rotate(0.0 117.5 24.0)">- Los Angeles</text>
<text x="117.5" y="47.3" font-size="7.6" fill="#62808f" stroke="#f6f4ef" stroke-width="1.6" paint-order="stroke" text-anchor="middle" textLength="23.7" lengthAdjust="spacingAndGlyphs" transform="rotate(0.0 117.5 47.3)">The Art</text>
<text x="117.5" y="58.0" font-size="7.6" fill="#62808f" stroke="#f6f4ef" stroke-width="1.6" paint-order="stroke" text-anchor="middle" textLength="28.6" lengthAdjust="spacingAndGlyphs" transform="rotate(0.0 117.5 58.0)">Institute</text>
<text x="117.5" y="68.4" font-size="7.6" fill="#62808f" stroke="#f6f4ef" stroke-width="1.6" paint-order="stroke" text-anchor="middle" textLength="41.0" lengthAdjust="spacingAndGlyphs" transform="rotate(0.0 117.5 68.4)">of California</text>
<text x="117.5" y="79.0" font-size="7.6" fill="#62808f" stroke="#f6f4ef" stroke-width="1.6" paint-order="stroke" text-anchor="middle" textLength="43.2" lengthAdjust="spacingAndGlyphs" transform="rotate(0.0 117.5 79.0)">- Los Angeles</text>
<path d="M114.5,30 h2 v5 h-2 z M118.5,30 h2 v5 h-2 z" fill="#444"/>
<text x="290.0" y="155.0" font-size="8.6" fill="#555" stroke="#f6f4ef" stroke-width="1.6" paint-order="stroke" text-anchor="middle" textLength="58.0" lengthAdjust="spacingAndGlyphs" transform="rotate(-34.0 290.0 155.0)">Airport Avenue</text>
<text x="111.0" y="287.0" font-size="8.6" fill="#555" stroke="#f6f4ef" stroke-width="1.6" paint-order="stroke" text-anchor="middle" textLength="58.0" lengthAdjust="spacingAndGlyphs" transform="rotate(-37.0 111.0 287.0)">Airport Avenue</text>
<text x="172.0" y="265.0" font-size="8.0" fill="#62808f" stroke="#f6f4ef" stroke-width="1.6" paint-order="stroke" text-anchor="middle" textLength="48.0" lengthAdjust="spacingAndGlyphs" transform="rotate(-30.0 172.0 265.0)">Santa Monica</text>
<text x="157.0" y="291.0" font-size="8.0" fill="#62808f" stroke="#f6f4ef" stroke-width="1.6" paint-order="stroke" text-anchor="middle" textLength="44.0" lengthAdjust="spacingAndGlyphs" transform="rotate(-30.0 157.0 291.0)">Los Angeles</text>
<text x="218.0" y="251.0" font-size="8.0" fill="#62808f" stroke="#f6f4ef" stroke-width="1.6" paint-order="stroke" text-anchor="middle" textLength="37.0" lengthAdjust="spacingAndGlyphs" transform="rotate(-30.0 218.0 251.0)">Mar Vista</text>
<text x="331.2" y="38.5" font-size="8.0" fill="#62808f" stroke="#f6f4ef" stroke-width="1.6" paint-order="stroke" text-anchor="middle" textLength="46.0" lengthAdjust="spacingAndGlyphs" transform="rotate(54.0 331.2 38.5)">Santa Monica</text>
<text x="339.2" y="20.5" font-size="8.0" fill="#62808f" stroke="#f6f4ef" stroke-width="1.6" paint-order="stroke" text-anchor="middle" textLength="44.0" lengthAdjust="spacingAndGlyphs" transform="rotate(54.0 339.2 20.5)">Los Angeles</text>
<text x="228.0" y="294.0" font-size="8.6" fill="#555" stroke="#f6f4ef" stroke-width="1.6" paint-order="stroke" text-anchor="middle" textLength="56.0" lengthAdjust="spacingAndGlyphs" transform="rotate(-30.0 228.0 294.0)">Stanwood Drive</text>
<text x="346.0" y="232.0" font-size="8.6" fill="#555" stroke="#f6f4ef" stroke-width="1.6" paint-order="stroke" text-anchor="middle" transform="rotate(-30.0 346.0 232.0)">Stanw</text>
<text x="350.0" y="271.0" font-size="8.6" fill="#555" stroke="#f6f4ef" stroke-width="1.6" paint-order="stroke" text-anchor="middle" transform="rotate(-30.0 350.0 271.0)">Ro</text></svg>
<div style="position:absolute;left:8.6px;top:8.8px;width:25px;height:48.5px;background:#fff;border:1.5px solid rgba(0,0,0,0.28);border-radius:3px;background-clip:padding-box"></div>
<div style="position:absolute;left:10px;top:32px;width:22px;height:1px;background:#ddd"></div>
<svg width="26" height="52" style="position:absolute;left:8.4px;top:9px"><path d="M7.8,13 H17.4 M12.6,8.3 V17.7" stroke="#000" stroke-width="2.2"/><path d="M7.8,36.8 H17.4" stroke="#000" stroke-width="2.2"/></svg>
<div style="position:absolute;left:139.5px;top:89.7px;width:74.6px;height:21.5px;border:2px solid #e4562b;border-radius:11px;background:#fff;box-shadow:0 0 0 1.5px rgba(255,255,255,0.85)"></div>
<svg width="353" height="325" style="position:absolute;left:0;top:0">
<text x="150.5" y="104.4" font-size="11" font-weight="bold" fill="#e4562b" textLength="52.6" lengthAdjust="spacingAndGlyphs">Sensor T1</text>
<ellipse cx="177.2" cy="159" rx="8.5" ry="3" fill="#8f8f8f" opacity="0.8"/>
<path d="M177,155.8 L166.2,144.8 A15,15 0 1 1 187.8,144.8 Z" fill="#e24d1c"/>
<circle cx="177" cy="134.5" r="10.4" fill="#fff"/>
<path d="M175,134.5 V130 A2,2 0 0 1 179,130 V134.5 A3.9,3.9 0 1 1 175,134.5 Z" fill="none" stroke="#e24d1c" stroke-width="1.2"/>
<circle cx="177" cy="137.5" r="1.8" fill="#e24d1c"/>
<path d="M177,136 V131.5" stroke="#e24d1c" stroke-width="1"/>
<path d="M332.8,30.6 L327.3,21.6 A7,7 0 1 1 338.3,21.6 Z" fill="#000"/>
<path d="M332.8,13.4 V21.8 M328.6,17.6 H337" stroke="#eee" stroke-width="2.1"/>
</svg>
<div style="position:absolute;left:0;top:300px;width:353px;height:25px;background:rgba(255,255,255,0.62)"></div>
<svg width="353" height="325" style="position:absolute;left:0;top:0">
<g fill="none" stroke="rgba(47,127,181,0.35)" stroke-width="0.8"><path d="M4,310.8 H31.5 M46,310.8 H107 M210,310.8 H348 M44,323.2 H133"/></g>
<text x="4" y="308.6" font-size="8.6" fill="#3a3a3a"><tspan fill="#2f7fb5">Leaflet</tspan> | © <tspan fill="#2f7fb5">OpenStreetMap</tspan> contributors, Tiles style by <tspan fill="#2f7fb5">Humanitarian OpenStreetMap Team</tspan></text>
<text x="4" y="321" font-size="8.6" fill="#3a3a3a">hosted by <tspan fill="#2f7fb5">OpenStreetMap France</tspan></text>
</svg>
</div>
</body></html>
